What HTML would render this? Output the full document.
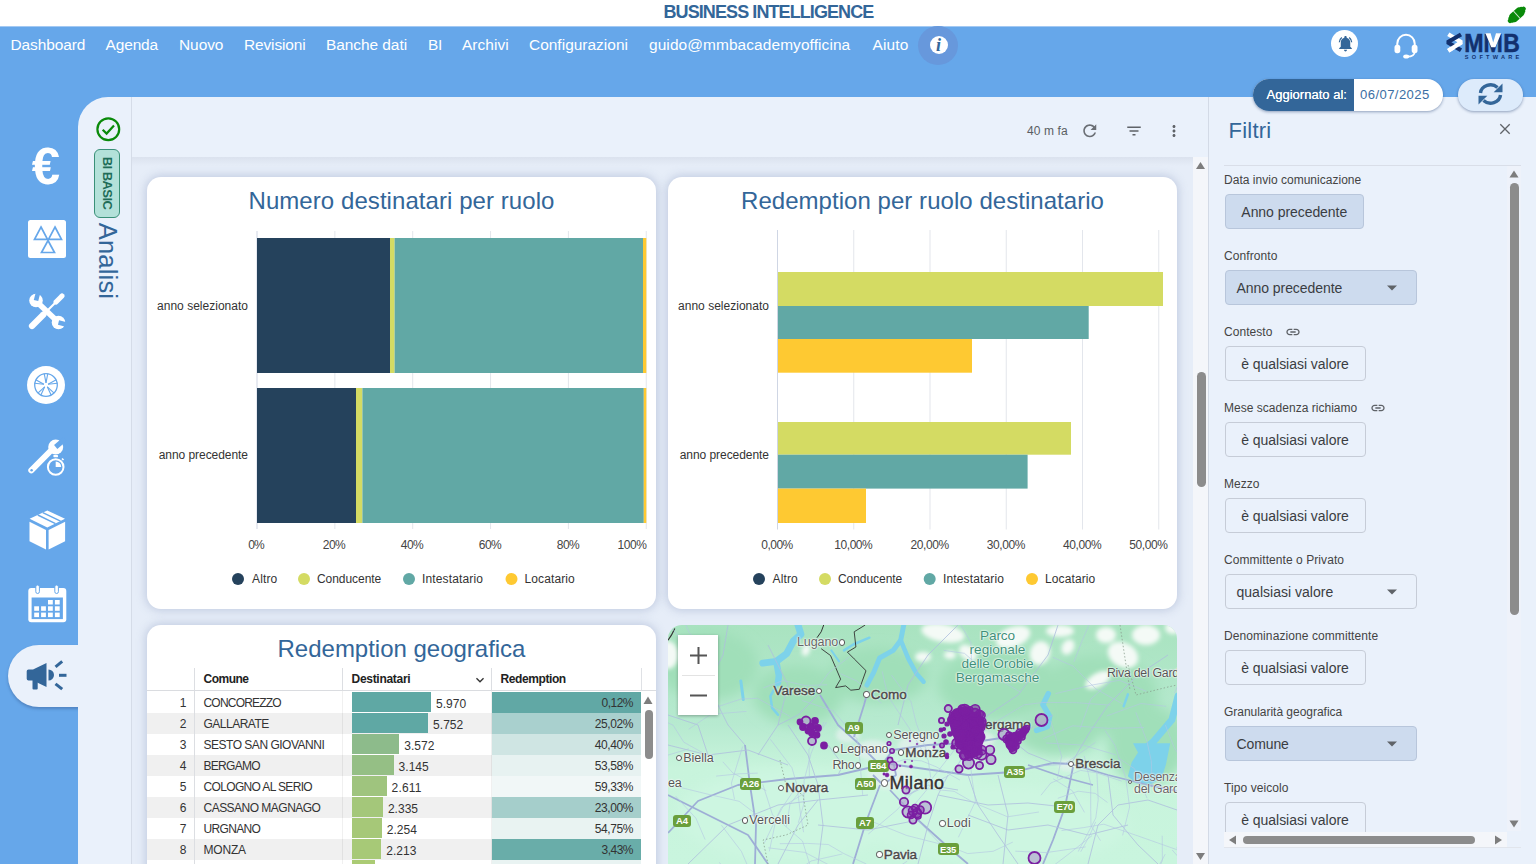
<!DOCTYPE html>
<html lang="it"><head><meta charset="utf-8"><title>Business Intelligence</title>
<style>
:root{--f:"Liberation Sans",sans-serif;}
*{box-sizing:border-box;margin:0;padding:0}
html,body{width:1536px;height:864px;overflow:hidden}
body{background:#66a7ea;font-family:var(--f);position:relative;color:#333}
.abs{position:absolute}
svg{position:absolute;overflow:visible}
.t{position:absolute;white-space:nowrap;line-height:1}
.card{position:absolute;background:#fff;border-radius:14px;box-shadow:0 0 8px 2px rgba(150,165,198,.42)}
</style></head><body>
<div class="abs" style="left:0px;top:0px;width:1536px;height:26px;background:#fff;"></div>
<div class="abs" style="left:0px;top:26px;width:1536px;height:1px;background:#a3c9f3;"></div>
<span class="t" style="letter-spacing:-0.911px;left:663.5px;top:3.04px;font-size:18px;color:#336699;font-weight:700;">BUSINESS INTELLIGENCE</span>
<span class="t" style="letter-spacing:-0.095px;left:10.5px;top:37.29px;font-size:15.45px;color:#fff;">Dashboard</span>
<span class="t" style="letter-spacing:-0.112px;left:105.5px;top:37.29px;font-size:15.45px;color:#fff;">Agenda</span>
<span class="t" style="letter-spacing:-0.047px;left:179px;top:37.29px;font-size:15.45px;color:#fff;">Nuovo</span>
<span class="t" style="letter-spacing:-0.111px;left:244px;top:37.29px;font-size:15.45px;color:#fff;">Revisioni</span>
<span class="t" style="letter-spacing:-0.045px;left:326px;top:37.29px;font-size:15.45px;color:#fff;">Banche dati</span>
<span class="t" style="letter-spacing:-0.383px;left:428px;top:37.29px;font-size:15.45px;color:#fff;">BI</span>
<span class="t" style="letter-spacing:0.058px;left:462px;top:37.29px;font-size:15.45px;color:#fff;">Archivi</span>
<span class="t" style="letter-spacing:0.018px;left:529px;top:37.29px;font-size:15.45px;color:#fff;">Configurazioni</span>
<span class="t" style="letter-spacing:0.094px;left:649px;top:37.29px;font-size:15.45px;color:#fff;">guido@mmbacademyofficina</span>
<span class="t" style="letter-spacing:0.172px;left:872.5px;top:37.29px;font-size:15.45px;color:#fff;">Aiuto</span>
<div class="abs" style="left:8px;top:645px;width:90px;height:62px;background:#eaf1fb;border-radius:31px 0 0 31px;box-shadow:0 2px 3px rgba(40,70,120,.35)"></div>
<div class="abs" style="left:78px;top:97px;width:1458px;height:767px;background:#eaf1fb;border-top-left-radius:30px"></div>
<div class="abs" style="left:131px;top:97px;width:1px;height:767px;background:#d5dce8;"></div>
<div class="abs" style="left:132px;top:157px;width:1076px;height:707px;background:#e6edf8;"></div>
<div class="abs" style="left:132px;top:157px;width:1076px;height:9px;background:linear-gradient(#dbe2ee,rgba(230,237,248,0));"></div>
<div class="abs" style="left:1193px;top:157px;width:15px;height:707px;background:#f4f6fa;"></div>
<div class="abs" style="left:1196.5px;top:372px;width:9px;height:115px;background:#8c8c8c;border-radius:5px"></div>
<svg style="left:1193px;top:157px" width="15" height="707"><path d="M3 12 L7.5 5 L12 12Z" fill="#7d7d7d"/><path d="M3 696 L7.5 703 L12 696Z" fill="#7d7d7d"/></svg>
<div class="card" style="left:147px;top:177px;width:509px;height:432px"></div>
<span class="t" style="letter-spacing:0.066px;left:401.5px;top:189.09px;font-size:24px;color:#336699;transform:translateX(-50%);">Numero destinatari per ruolo</span>
<svg style="left:0;top:0" width="1536" height="864"><rect x="256.50" y="231" width="1" height="298" fill="#cfd6e4"/><rect x="334.35" y="231" width="1" height="298" fill="#e3e6ec"/><rect x="412.20" y="231" width="1" height="298" fill="#e3e6ec"/><rect x="490.05" y="231" width="1" height="298" fill="#e3e6ec"/><rect x="567.90" y="231" width="1" height="298" fill="#e3e6ec"/><rect x="645.75" y="231" width="1" height="298" fill="#e3e6ec"/><rect x="257" y="238" width="133" height="135" fill="#25425c"/><rect x="390" y="238" width="4.6" height="135" fill="#d4db63"/><rect x="394.6" y="238" width="248.4" height="135" fill="#61a8a5"/><rect x="643" y="238" width="3.3" height="135" fill="#fec932"/><rect x="257" y="388" width="99" height="135" fill="#25425c"/><rect x="356" y="388" width="6.4" height="135" fill="#d4db63"/><rect x="362.4" y="388" width="281.4" height="135" fill="#61a8a5"/><rect x="643.8" y="388" width="2.5" height="135" fill="#fec932"/><circle cx="238" cy="579" r="6" fill="#25425c"/><circle cx="304" cy="579" r="6" fill="#d4db63"/><circle cx="409" cy="579" r="6" fill="#61a8a5"/><circle cx="511.5" cy="579" r="6" fill="#fec932"/></svg>
<span class="t" style="letter-spacing:0.014px;left:248px;top:299.90px;font-size:12px;color:#333;transform:translateX(-100%);">anno selezionato</span>
<span class="t" style="letter-spacing:-0.048px;left:248px;top:448.90px;font-size:12px;color:#333;transform:translateX(-100%);">anno precedente</span>
<span class="t" style="letter-spacing:-0.898px;left:256px;top:538.90px;font-size:12px;color:#444;transform:translateX(-50%);">0%</span>
<span class="t" style="letter-spacing:-0.583px;left:334px;top:538.90px;font-size:12px;color:#444;transform:translateX(-50%);">20%</span>
<span class="t" style="letter-spacing:-0.583px;left:412px;top:538.90px;font-size:12px;color:#444;transform:translateX(-50%);">40%</span>
<span class="t" style="letter-spacing:-0.583px;left:490px;top:538.90px;font-size:12px;color:#444;transform:translateX(-50%);">60%</span>
<span class="t" style="letter-spacing:-0.583px;left:568px;top:538.90px;font-size:12px;color:#444;transform:translateX(-50%);">80%</span>
<span class="t" style="letter-spacing:-0.418px;left:646.5px;top:538.90px;font-size:12px;color:#444;transform:translateX(-100%);">100%</span>
<span class="t" style="letter-spacing:0.156px;left:252px;top:573.10px;font-size:12px;color:#333;">Altro</span>
<span class="t" style="letter-spacing:-0.048px;left:317px;top:573.10px;font-size:12px;color:#333;">Conducente</span>
<span class="t" style="letter-spacing:0.145px;left:422px;top:573.10px;font-size:12px;color:#333;">Intestatario</span>
<span class="t" style="letter-spacing:0.115px;left:524.5px;top:573.10px;font-size:12px;color:#333;">Locatario</span>
<div class="card" style="left:668px;top:177px;width:509px;height:432px"></div>
<span class="t" style="letter-spacing:0.041px;left:922.5px;top:189.09px;font-size:24px;color:#336699;transform:translateX(-50%);">Redemption per ruolo destinatario</span>
<svg style="left:0;top:0" width="1536" height="864"><rect x="777.00" y="230" width="1" height="299.5" fill="#cfd6e4"/><rect x="853.25" y="230" width="1" height="299.5" fill="#e3e6ec"/><rect x="929.50" y="230" width="1" height="299.5" fill="#e3e6ec"/><rect x="1005.75" y="230" width="1" height="299.5" fill="#e3e6ec"/><rect x="1082.00" y="230" width="1" height="299.5" fill="#e3e6ec"/><rect x="1158.25" y="230" width="1" height="299.5" fill="#e3e6ec"/><rect x="778" y="272" width="385" height="34" fill="#d4db63"/><rect x="778" y="306" width="310.7" height="33" fill="#61a8a5"/><rect x="778" y="339" width="194" height="33.7" fill="#fec932"/><rect x="778" y="422" width="293" height="32.7" fill="#d4db63"/><rect x="778" y="454.7" width="249.6" height="33.9" fill="#61a8a5"/><rect x="778" y="488.6" width="88" height="34.4" fill="#fec932"/><circle cx="759" cy="579" r="6" fill="#25425c"/><circle cx="825" cy="579" r="6" fill="#d4db63"/><circle cx="929.7" cy="579" r="6" fill="#61a8a5"/><circle cx="1032" cy="579" r="6" fill="#fec932"/></svg>
<span class="t" style="letter-spacing:0.014px;left:769px;top:299.90px;font-size:12px;color:#333;transform:translateX(-100%);">anno selezionato</span>
<span class="t" style="letter-spacing:-0.048px;left:769px;top:448.90px;font-size:12px;color:#333;transform:translateX(-100%);">anno precedente</span>
<span class="t" style="letter-spacing:-0.528px;left:777px;top:538.90px;font-size:12px;color:#444;transform:translateX(-50%);">0,00%</span>
<span class="t" style="letter-spacing:-0.427px;left:853.3px;top:538.90px;font-size:12px;color:#444;transform:translateX(-50%);">10,00%</span>
<span class="t" style="letter-spacing:-0.427px;left:929.6px;top:538.90px;font-size:12px;color:#444;transform:translateX(-50%);">20,00%</span>
<span class="t" style="letter-spacing:-0.427px;left:1005.9px;top:538.90px;font-size:12px;color:#444;transform:translateX(-50%);">30,00%</span>
<span class="t" style="letter-spacing:-0.427px;left:1082.2px;top:538.90px;font-size:12px;color:#444;transform:translateX(-50%);">40,00%</span>
<span class="t" style="letter-spacing:-0.427px;left:1167.5px;top:538.90px;font-size:12px;color:#444;transform:translateX(-100%);">50,00%</span>
<span class="t" style="letter-spacing:0.156px;left:772.5px;top:573.10px;font-size:12px;color:#333;">Altro</span>
<span class="t" style="letter-spacing:-0.048px;left:838px;top:573.10px;font-size:12px;color:#333;">Conducente</span>
<span class="t" style="letter-spacing:0.145px;left:943px;top:573.10px;font-size:12px;color:#333;">Intestatario</span>
<span class="t" style="letter-spacing:0.115px;left:1045px;top:573.10px;font-size:12px;color:#333;">Locatario</span>
<div class="card" style="left:147px;top:625px;width:509px;height:260px"></div>
<span class="t" style="letter-spacing:-0.013px;left:401.5px;top:637.09px;font-size:24px;color:#336699;transform:translateX(-50%);">Redemption geografica</span>
<div class="abs" style="left:491.5px;top:691.6px;width:149px;height:21px;background:#61a8a5;"></div>
<div class="abs" style="left:352px;top:692.4px;width:79.001px;height:19.2px;background:#5fa8a4;"></div>
<span class="t" style="letter-spacing:0.062px;left:186.5px;top:696.70px;font-size:12px;color:#333;transform:translateX(-100%);">1</span>
<span class="t" style="letter-spacing:-0.795px;left:203.5px;top:696.70px;font-size:12px;color:#333;">CONCOREZZO</span>
<span class="t" style="letter-spacing:0.022px;left:436.001px;top:697.70px;font-size:12px;color:#333;">5.970</span>
<span class="t" style="letter-spacing:-0.528px;left:633px;top:696.70px;font-size:12px;color:#333;transform:translateX(-100%);">0,12%</span>
<div class="abs" style="left:147px;top:712.6px;width:494px;height:21px;background:#f0f0f0;"></div>
<div class="abs" style="left:491.5px;top:712.6px;width:149px;height:21px;background:#a9d0ce;"></div>
<div class="abs" style="left:352px;top:713.4px;width:76.1162px;height:19.2px;background:#5fa8a4;"></div>
<span class="t" style="letter-spacing:0.062px;left:186.5px;top:717.70px;font-size:12px;color:#333;transform:translateX(-100%);">2</span>
<span class="t" style="letter-spacing:-0.498px;left:203.5px;top:717.70px;font-size:12px;color:#333;">GALLARATE</span>
<span class="t" style="letter-spacing:0.022px;left:433.116px;top:718.70px;font-size:12px;color:#333;">5.752</span>
<span class="t" style="letter-spacing:-0.427px;left:633px;top:717.70px;font-size:12px;color:#333;transform:translateX(-100%);">25,02%</span>
<div class="abs" style="left:491.5px;top:733.6px;width:149px;height:21px;background:#cfe5e3;"></div>
<div class="abs" style="left:352px;top:734.4px;width:47.2683px;height:19.2px;background:#8dbb8b;"></div>
<span class="t" style="letter-spacing:0.062px;left:186.5px;top:738.70px;font-size:12px;color:#333;transform:translateX(-100%);">3</span>
<span class="t" style="letter-spacing:-0.490px;left:203.5px;top:738.70px;font-size:12px;color:#333;">SESTO SAN GIOVANNI</span>
<span class="t" style="letter-spacing:0.022px;left:404.268px;top:739.70px;font-size:12px;color:#333;">3.572</span>
<span class="t" style="letter-spacing:-0.427px;left:633px;top:738.70px;font-size:12px;color:#333;transform:translateX(-100%);">40,40%</span>
<div class="abs" style="left:147px;top:754.6px;width:494px;height:21px;background:#f0f0f0;"></div>
<div class="abs" style="left:491.5px;top:754.6px;width:149px;height:21px;background:#e7f2f1;"></div>
<div class="abs" style="left:352px;top:755.4px;width:41.6178px;height:19.2px;background:#95bf85;"></div>
<span class="t" style="letter-spacing:0.062px;left:186.5px;top:759.70px;font-size:12px;color:#333;transform:translateX(-100%);">4</span>
<span class="t" style="letter-spacing:-0.701px;left:203.5px;top:759.70px;font-size:12px;color:#333;">BERGAMO</span>
<span class="t" style="letter-spacing:0.022px;left:398.618px;top:760.70px;font-size:12px;color:#333;">3.145</span>
<span class="t" style="letter-spacing:-0.427px;left:633px;top:759.70px;font-size:12px;color:#333;transform:translateX(-100%);">53,58%</span>
<div class="abs" style="left:491.5px;top:775.6px;width:149px;height:21px;background:#f1f7f7;"></div>
<div class="abs" style="left:352px;top:776.4px;width:34.5514px;height:19.2px;background:#9fc47e;"></div>
<span class="t" style="letter-spacing:0.062px;left:186.5px;top:780.70px;font-size:12px;color:#333;transform:translateX(-100%);">5</span>
<span class="t" style="letter-spacing:-0.651px;left:203.5px;top:780.70px;font-size:12px;color:#333;">COLOGNO AL SERIO</span>
<span class="t" style="letter-spacing:0.200px;left:391.551px;top:781.70px;font-size:12px;color:#333;">2.611</span>
<span class="t" style="letter-spacing:-0.427px;left:633px;top:780.70px;font-size:12px;color:#333;transform:translateX(-100%);">59,33%</span>
<div class="abs" style="left:147px;top:796.6px;width:494px;height:21px;background:#f0f0f0;"></div>
<div class="abs" style="left:491.5px;top:796.6px;width:149px;height:21px;background:#a5cecb;"></div>
<div class="abs" style="left:352px;top:797.4px;width:30.8991px;height:19.2px;background:#a4c77a;"></div>
<span class="t" style="letter-spacing:0.062px;left:186.5px;top:801.70px;font-size:12px;color:#333;transform:translateX(-100%);">6</span>
<span class="t" style="letter-spacing:-0.520px;left:203.5px;top:801.70px;font-size:12px;color:#333;">CASSANO MAGNAGO</span>
<span class="t" style="letter-spacing:0.022px;left:387.899px;top:802.70px;font-size:12px;color:#333;">2.335</span>
<span class="t" style="letter-spacing:-0.427px;left:633px;top:801.70px;font-size:12px;color:#333;transform:translateX(-100%);">23,00%</span>
<div class="abs" style="left:491.5px;top:817.6px;width:149px;height:21px;background:#e9f3f2;"></div>
<div class="abs" style="left:352px;top:818.4px;width:29.8272px;height:19.2px;background:#a6c878;"></div>
<span class="t" style="letter-spacing:0.062px;left:186.5px;top:822.70px;font-size:12px;color:#333;transform:translateX(-100%);">7</span>
<span class="t" style="letter-spacing:-0.667px;left:203.5px;top:822.70px;font-size:12px;color:#333;">URGNANO</span>
<span class="t" style="letter-spacing:0.022px;left:386.827px;top:823.70px;font-size:12px;color:#333;">2.254</span>
<span class="t" style="letter-spacing:-0.427px;left:633px;top:822.70px;font-size:12px;color:#333;transform:translateX(-100%);">54,75%</span>
<div class="abs" style="left:147px;top:838.6px;width:494px;height:21px;background:#f0f0f0;"></div>
<div class="abs" style="left:491.5px;top:838.6px;width:149px;height:21px;background:#69ada9;"></div>
<div class="abs" style="left:352px;top:839.4px;width:29.2846px;height:19.2px;background:#a7c977;"></div>
<span class="t" style="letter-spacing:0.062px;left:186.5px;top:843.70px;font-size:12px;color:#333;transform:translateX(-100%);">8</span>
<span class="t" style="letter-spacing:-0.191px;left:203.5px;top:843.70px;font-size:12px;color:#333;">MONZA</span>
<span class="t" style="letter-spacing:0.022px;left:386.285px;top:844.70px;font-size:12px;color:#333;">2.213</span>
<span class="t" style="letter-spacing:-0.528px;left:633px;top:843.70px;font-size:12px;color:#333;transform:translateX(-100%);">3,43%</span>
<div class="abs" style="left:491.5px;top:859.6px;width:149px;height:21px;background:#e9f3f2;"></div>
<div class="abs" style="left:352px;top:860.4px;width:22.7078px;height:19.2px;background:#abcb74;"></div>
<div class="abs" style="left:193.7px;top:668px;width:1px;height:200px;background:#dcdee2;"></div>
<div class="abs" style="left:342px;top:668px;width:1px;height:23px;background:#dcdee2;"></div>
<div class="abs" style="left:342px;top:691px;width:1px;height:180px;background:rgba(0,0,0,.06);"></div>
<div class="abs" style="left:491px;top:668px;width:1px;height:23px;background:#dcdee2;"></div>
<div class="abs" style="left:491px;top:691px;width:1px;height:180px;background:rgba(0,0,0,.06);"></div>
<div class="abs" style="left:640.5px;top:668px;width:1px;height:23px;background:#dfe1e5;"></div>
<div class="abs" style="left:147px;top:690px;width:509px;height:1px;background:#dadce0;"></div>
<span class="t" style="letter-spacing:-0.508px;left:203.5px;top:673.20px;font-size:12px;color:#222;font-weight:700;">Comune</span>
<span class="t" style="letter-spacing:-0.286px;left:351.5px;top:673.20px;font-size:12px;color:#222;font-weight:700;">Destinatari</span>
<span class="t" style="letter-spacing:-0.405px;left:500.5px;top:673.20px;font-size:12px;color:#222;font-weight:700;">Redemption</span>
<svg style="left:472px;top:672px" width="16" height="16" viewBox="0 0 24 24"><path d="M7.4 8.6 12 13.2l4.6-4.6L18 10l-6 6-6-6z" fill="#333"/></svg>
<div class="abs" style="left:644.5px;top:709.5px;width:8px;height:49px;background:#8c8c8c;border-radius:4px"></div>
<svg style="left:641px;top:691px" width="15" height="20"><path d="M2.5 13 L7 5.5 L11.5 13Z" fill="#7d7d7d"/></svg>
<svg style="left:668px;top:625px" width="509" height="239" viewBox="0 0 509 239"><defs><clipPath id="mc"><path d="M0 14 A14 14 0 0 1 14 0 H495 A14 14 0 0 1 509 14 V239 H0Z"/></clipPath><filter id="bl" x="-20%" y="-20%" width="140%" height="140%"><feGaussianBlur stdDeviation="2.2"/></filter><filter id="bl2" x="-20%" y="-20%" width="140%" height="140%"><feGaussianBlur stdDeviation="6"/></filter><linearGradient id="mg" x1="0" y1="0" x2="0" y2="1"><stop offset="0" stop-color="#a9e3c0"/><stop offset="0.42" stop-color="#b7ead0"/><stop offset="0.6" stop-color="#c8f4dc"/><stop offset="1" stop-color="#c9f5de"/></linearGradient></defs><g clip-path="url(#mc)"><rect width="509" height="239" fill="url(#mg)"/><g filter="url(#bl2)" fill="#a0dfb9"><ellipse cx="40" cy="40" rx="50" ry="35"/><ellipse cx="130" cy="70" rx="45" ry="30"/><ellipse cx="210" cy="50" rx="50" ry="28"/><ellipse cx="330" cy="60" rx="60" ry="35"/><ellipse cx="430" cy="70" rx="60" ry="40"/><ellipse cx="480" cy="120" rx="40" ry="40"/><ellipse cx="390" cy="110" rx="40" ry="20"/></g><g filter="url(#bl2)" fill="#cdf6e1"><ellipse cx="120" cy="190" rx="110" ry="45"/><ellipse cx="330" cy="200" rx="130" ry="40"/><ellipse cx="250" cy="150" rx="60" ry="25"/></g><g filter="url(#bl)" fill="#f4faf6"><ellipse cx="275" cy="8" rx="22" ry="9" transform="rotate(10 275 8)"/><ellipse cx="300" cy="28" rx="10" ry="7" transform="rotate(40 300 28)"/><ellipse cx="345" cy="12" rx="18" ry="10" transform="rotate(-20 345 12)"/><ellipse cx="372" cy="28" rx="10" ry="12" transform="rotate(20 372 28)"/><ellipse cx="392" cy="6" rx="14" ry="6" transform="rotate(0 392 6)"/><ellipse cx="255" cy="32" rx="8" ry="5" transform="rotate(0 255 32)"/><ellipse cx="282" cy="30" rx="6" ry="4" transform="rotate(0 282 30)"/><ellipse cx="455" cy="30" rx="16" ry="12" transform="rotate(30 455 30)"/><ellipse cx="478" cy="10" rx="14" ry="10" transform="rotate(0 478 10)"/><ellipse cx="438" cy="10" rx="10" ry="8" transform="rotate(0 438 10)"/><ellipse cx="430" cy="55" rx="14" ry="7" transform="rotate(-30 430 55)"/><ellipse cx="400" cy="22" rx="6" ry="8" transform="rotate(30 400 22)"/><ellipse cx="0" cy="30" rx="10" ry="14" transform="rotate(0 0 30)"/><ellipse cx="505" cy="3" rx="8" ry="6" transform="rotate(0 505 3)"/><ellipse cx="138" cy="25" rx="4" ry="6" transform="rotate(20 138 25)"/></g><g filter="url(#bl)" fill="#e4f1ee" opacity=".8"><ellipse cx="222" cy="150" rx="22" ry="14"/><ellipse cx="205" cy="125" rx="18" ry="10"/><ellipse cx="250" cy="120" rx="20" ry="10"/><ellipse cx="305" cy="115" rx="22" ry="10"/><ellipse cx="180" cy="110" rx="12" ry="8"/><ellipse cx="400" cy="140" rx="10" ry="6"/></g><polyline points="129.5,-1.7 132.9,9.3 125.3,16.1 118.5,28.8 108.3,36.4 94.8,38.1" fill="none" stroke="#7dd2ea" stroke-width="7" stroke-linecap="round" stroke-linejoin="round"/><polyline points="108.3,36.4 110.9,50.8 110.0,57.5" fill="none" stroke="#7dd2ea" stroke-width="6.5" stroke-linecap="round" stroke-linejoin="round"/><polyline points="110.0,57.5 102.4,71.1 104.1,82.9 110.0,89.7" fill="none" stroke="#7dd2ea" stroke-width="2.5" stroke-linecap="round" stroke-linejoin="round"/><polyline points="72.8,55.9 75.3,74.5" fill="none" stroke="#7dd2ea" stroke-width="3" stroke-linecap="round" stroke-linejoin="round"/><polyline points="176.0,25.4 185.3,19.5 201.4,12.7" fill="none" stroke="#7dd2ea" stroke-width="2.5" stroke-linecap="round" stroke-linejoin="round"/><polyline points="163.3,25.4 171.0,36.4" fill="none" stroke="#7dd2ea" stroke-width="2" stroke-linecap="round" stroke-linejoin="round"/><polyline points="236.1,-1.7 232.7,15.2 225.1,25.4 211.6,33.0 205.7,47.4 198.9,60.1" fill="none" stroke="#7dd2ea" stroke-width="5" stroke-linecap="round" stroke-linejoin="round"/><polyline points="232.7,15.2 240.4,33.9 248.8,49.1 255.6,56.7" fill="none" stroke="#7dd2ea" stroke-width="4.5" stroke-linecap="round" stroke-linejoin="round"/><polyline points="380.3,68.6 374.9,79.6 381.7,91.4 379.5,101.6 368.5,105.3" fill="none" stroke="#7dd2ea" stroke-width="5.5" stroke-linecap="round" stroke-linejoin="round"/><polyline points="510.0,71.1 503.9,94.8 485.3,116.8 475.1,125.3" fill="none" stroke="#7dd2ea" stroke-width="7" stroke-linecap="round" stroke-linejoin="round"/><polygon points="465.0,118.2 502.2,118.2 498.0,139.3 493.7,152.9 483.6,158.8 468.3,158.3 459.9,151.2 463.6,137.6 470.0,127.5" fill="#7dd2ea"/><polyline points="459.9,69.4 455.7,81.2" fill="none" stroke="#7dd2ea" stroke-width="2.5" stroke-linecap="round" stroke-linejoin="round"/><polyline points="155.7,0.0 153.2,6.8 149.0,12.7" fill="none" stroke="#333" stroke-width="1"/><polyline points="197.2,0.0 186.2,6.8 187.9,22.0 179.4,27.1 186.2,33.9 198.0,45.7 191.3,64.3 182.8,65.2 177.7,60.9 167.6,62.6 172.6,54.2 167.6,42.3 162.5,30.5 153.2,23.7" fill="none" stroke="#333" stroke-width="0.9"/><polyline points="6.8,3.4 3.4,10.2 0.0,15.2" fill="none" stroke="#333" stroke-width="1.2"/><polyline points="0,208 30,176 70,160 120,154 170,150 200,143 215,138" fill="none" stroke="#9eaed6" stroke-width="1.8" stroke-linejoin="round" opacity="1"/><polyline points="215,138 250,143 300,150 345,147 385,138 403,139 440,150 480,160 509,166" fill="none" stroke="#9eaed6" stroke-width="1.8" stroke-linejoin="round" opacity="1"/><polyline points="77,120 82,160 88,200 87,239" fill="none" stroke="#9eaed6" stroke-width="1.8" stroke-linejoin="round" opacity="1"/><polyline points="0,170 40,190 80,210 100,239" fill="none" stroke="#9eaed6" stroke-width="1.8" stroke-linejoin="round" opacity="1"/><polyline points="212,140 190,118 170,100 152,70" fill="none" stroke="#9eaed6" stroke-width="1.8" stroke-linejoin="round" opacity="1"/><polyline points="186,112 196,80 199,69" fill="none" stroke="#9eaed6" stroke-width="1.8" stroke-linejoin="round" opacity="1"/><polyline points="212,160 198,197 185,239" fill="none" stroke="#9eaed6" stroke-width="1.8" stroke-linejoin="round" opacity="1"/><polyline points="222,165 250,195 280,222 300,239" fill="none" stroke="#9eaed6" stroke-width="1.8" stroke-linejoin="round" opacity="1"/><polyline points="405,142 397,182 385,215 375,239" fill="none" stroke="#9eaed6" stroke-width="1.8" stroke-linejoin="round" opacity="1"/><polyline points="360,140 395,152 425,160" fill="none" stroke="#9eaed6" stroke-width="1.8" stroke-linejoin="round" opacity="1"/><polyline points="215,138 225,125 260,120 300,118 340,112" fill="none" stroke="#9eaed6" stroke-width="1.8" stroke-linejoin="round" opacity="1"/><polyline points="205,150 215,160 228,150 225,135" fill="none" stroke="#9eaed6" stroke-width="1.8" stroke-linejoin="round" opacity="1"/><polyline points="0,120 40,130 80,125 120,140" fill="none" stroke="#aebfde" stroke-width="0.9" stroke-linejoin="round" opacity="0.9"/><polyline points="20,239 60,200 110,180 150,175 200,170" fill="none" stroke="#aebfde" stroke-width="0.9" stroke-linejoin="round" opacity="0.9"/><polyline points="110,239 130,200 150,175" fill="none" stroke="#aebfde" stroke-width="0.9" stroke-linejoin="round" opacity="0.9"/><polyline points="120,100 140,130 150,160 155,200 150,239" fill="none" stroke="#aebfde" stroke-width="0.9" stroke-linejoin="round" opacity="0.9"/><polyline points="250,239 260,200 270,170 280,150" fill="none" stroke="#aebfde" stroke-width="0.9" stroke-linejoin="round" opacity="0.9"/><polyline points="300,150 310,180 330,210 350,239" fill="none" stroke="#aebfde" stroke-width="0.9" stroke-linejoin="round" opacity="0.9"/><polyline points="330,150 340,190 335,239" fill="none" stroke="#aebfde" stroke-width="0.9" stroke-linejoin="round" opacity="0.9"/><polyline points="420,239 430,200 450,180 480,175 509,185" fill="none" stroke="#aebfde" stroke-width="0.9" stroke-linejoin="round" opacity="0.9"/><polyline points="440,150 445,190 470,220 490,239" fill="none" stroke="#aebfde" stroke-width="0.9" stroke-linejoin="round" opacity="0.9"/><polyline points="270,170 320,180 360,178 397,182" fill="none" stroke="#aebfde" stroke-width="0.9" stroke-linejoin="round" opacity="0.9"/><polyline points="150,200 200,205 250,195" fill="none" stroke="#aebfde" stroke-width="0.9" stroke-linejoin="round" opacity="0.9"/><polyline points="40,60 60,100 77,120" fill="none" stroke="#aebfde" stroke-width="0.9" stroke-linejoin="round" opacity="0.9"/><polyline points="100,20 120,60 110,100 90,130" fill="none" stroke="#aebfde" stroke-width="0.9" stroke-linejoin="round" opacity="0.9"/><polyline points="150,70 130,90 110,100" fill="none" stroke="#aebfde" stroke-width="0.9" stroke-linejoin="round" opacity="0.9"/><polyline points="230,100 240,60 260,30 290,0" fill="none" stroke="#aebfde" stroke-width="0.9" stroke-linejoin="round" opacity="0.9"/><polyline points="300,118 320,90 350,70 380,30 390,0" fill="none" stroke="#aebfde" stroke-width="0.9" stroke-linejoin="round" opacity="0.9"/><polyline points="340,112 370,100 385,90" fill="none" stroke="#aebfde" stroke-width="0.9" stroke-linejoin="round" opacity="0.9"/><polyline points="403,139 420,110 440,80 470,50 500,30" fill="none" stroke="#aebfde" stroke-width="0.9" stroke-linejoin="round" opacity="0.9"/><polyline points="340,112 360,128 385,138" fill="none" stroke="#aebfde" stroke-width="0.9" stroke-linejoin="round" opacity="0.9"/><polyline points="60,0 55,30 40,60" fill="none" stroke="#aebfde" stroke-width="0.9" stroke-linejoin="round" opacity="0.9"/><polyline points="300,190 340,205 380,200 420,210 460,200" fill="none" stroke="#aebfde" stroke-width="0.9" stroke-linejoin="round" opacity="0.9"/><polyline points="160,120 175,140 170,150" fill="none" stroke="#aebfde" stroke-width="0.9" stroke-linejoin="round" opacity="0.9"/><polyline points="0,90 30,100 40,130" fill="none" stroke="#aebfde" stroke-width="0.9" stroke-linejoin="round" opacity="0.9"/><polyline points="240,170 260,160 290,165" fill="none" stroke="#aebfde" stroke-width="0.9" stroke-linejoin="round" opacity="0.9"/><polyline points="230.3,175.6 261.5,157.0 283.1,129.3 301.0,104.8" fill="none" stroke="#b4c6e2" stroke-width="0.8" stroke-linejoin="round" opacity="0.75"/><polyline points="94.8,159.3 104.6,190.1 134.5,216.0 143.8,245.9 146.9,264.6" fill="none" stroke="#b4c6e2" stroke-width="0.8" stroke-linejoin="round" opacity="0.75"/><polyline points="7.6,171.1 27.9,193.2 37.1,214.5" fill="none" stroke="#b4c6e2" stroke-width="0.8" stroke-linejoin="round" opacity="0.75"/><polyline points="300.8,123.1 304.1,154.5 307.5,176.2 290.4,212.3" fill="none" stroke="#b4c6e2" stroke-width="0.8" stroke-linejoin="round" opacity="0.75"/><polyline points="427.7,196.9 421.2,211.3 412.7,226.8" fill="none" stroke="#b4c6e2" stroke-width="0.8" stroke-linejoin="round" opacity="0.75"/><polyline points="54.9,136.9 64.9,148.0 98.3,165.7" fill="none" stroke="#b4c6e2" stroke-width="0.8" stroke-linejoin="round" opacity="0.75"/><polyline points="239.2,236.2 222.4,246.9 200.4,255.1" fill="none" stroke="#b4c6e2" stroke-width="0.8" stroke-linejoin="round" opacity="0.75"/><polyline points="158.4,97.2 140.9,124.8 141.4,151.4" fill="none" stroke="#b4c6e2" stroke-width="0.8" stroke-linejoin="round" opacity="0.75"/><polyline points="247.8,193.2 270.7,217.4 299.7,228.6 325.1,226.3 344.8,217.1" fill="none" stroke="#b4c6e2" stroke-width="0.8" stroke-linejoin="round" opacity="0.75"/><polyline points="494.2,210.7 494.4,235.5 481.8,263.9" fill="none" stroke="#b4c6e2" stroke-width="0.8" stroke-linejoin="round" opacity="0.75"/><polyline points="51.1,237.5 73.2,258.1 83.3,280.6 99.6,292.6" fill="none" stroke="#b4c6e2" stroke-width="0.8" stroke-linejoin="round" opacity="0.75"/><polyline points="324.0,97.2 299.3,127.3 281.1,150.4 263.5,159.1 239.4,188.1" fill="none" stroke="#b4c6e2" stroke-width="0.8" stroke-linejoin="round" opacity="0.75"/><polyline points="416.3,130.9 422.7,159.1 422.7,183.8 423.0,200.7 432.5,215.7" fill="none" stroke="#b4c6e2" stroke-width="0.8" stroke-linejoin="round" opacity="0.75"/><polyline points="260.8,131.7 248.3,98.4 243.0,76.7 223.5,50.1" fill="none" stroke="#b4c6e2" stroke-width="0.8" stroke-linejoin="round" opacity="0.75"/><polyline points="35.0,127.9 15.8,117.2 5.1,100.2 -14.7,91.1 -30.1,85.2" fill="none" stroke="#b4c6e2" stroke-width="0.8" stroke-linejoin="round" opacity="0.75"/><polyline points="89.7,148.1 71.3,148.8 48.1,151.1" fill="none" stroke="#b4c6e2" stroke-width="0.8" stroke-linejoin="round" opacity="0.75"/><polyline points="373.0,170.2 382.7,158.1 412.6,145.4 428.0,147.7 453.7,156.1" fill="none" stroke="#b4c6e2" stroke-width="0.8" stroke-linejoin="round" opacity="0.75"/><polyline points="371.8,140.9 396.0,139.4 427.4,117.4" fill="none" stroke="#b4c6e2" stroke-width="0.8" stroke-linejoin="round" opacity="0.75"/><polyline points="375.2,113.7 404.7,100.8 441.3,103.4 476.1,102.4" fill="none" stroke="#b4c6e2" stroke-width="0.8" stroke-linejoin="round" opacity="0.75"/><polyline points="439.5,177.5 427.2,168.4 410.1,166.2 389.8,173.3" fill="none" stroke="#b4c6e2" stroke-width="0.8" stroke-linejoin="round" opacity="0.75"/><polyline points="211.9,142.5 236.6,134.4 253.6,135.9 268.2,141.8 291.8,155.0" fill="none" stroke="#b4c6e2" stroke-width="0.8" stroke-linejoin="round" opacity="0.75"/><polyline points="117.2,195.6 90.4,190.9 71.2,176.3 41.6,169.6 8.7,161.5" fill="none" stroke="#b4c6e2" stroke-width="0.8" stroke-linejoin="round" opacity="0.75"/><polyline points="174.3,229.0 143.5,235.9 121.9,250.0" fill="none" stroke="#b4c6e2" stroke-width="0.8" stroke-linejoin="round" opacity="0.75"/><polyline points="410.2,226.6 427.8,192.9 430.2,174.7 428.4,137.4" fill="none" stroke="#b4c6e2" stroke-width="0.8" stroke-linejoin="round" opacity="0.75"/><polyline points="20.7,104.2 42.9,89.3 78.5,86.4" fill="none" stroke="#b4c6e2" stroke-width="0.8" stroke-linejoin="round" opacity="0.75"/><polyline points="194.7,169.9 191.4,130.5 189.0,113.8 165.2,85.7 134.1,75.5" fill="none" stroke="#b4c6e2" stroke-width="0.8" stroke-linejoin="round" opacity="0.75"/><polyline points="290.4,139.5 300.8,116.6 302.7,82.5" fill="none" stroke="#b4c6e2" stroke-width="0.8" stroke-linejoin="round" opacity="0.75"/><polyline points="135.6,207.2 132.6,189.7 128.7,159.0 123.9,142.7 102.4,114.3" fill="none" stroke="#b4c6e2" stroke-width="0.8" stroke-linejoin="round" opacity="0.75"/><polyline points="130.3,197.8 135.8,179.2 136.1,155.5 143.1,128.4 155.9,97.0" fill="none" stroke="#b4c6e2" stroke-width="0.8" stroke-linejoin="round" opacity="0.75"/><polyline points="200.3,209.0 228.9,185.0 246.5,165.6" fill="none" stroke="#b4c6e2" stroke-width="0.8" stroke-linejoin="round" opacity="0.75"/><polyline points="100.2,222.8 136.9,227.4 171.1,245.2 199.5,258.5 232.4,261.2" fill="none" stroke="#b4c6e2" stroke-width="0.8" stroke-linejoin="round" opacity="0.75"/><polyline points="416.5,187.4 404.4,165.8 385.1,153.7" fill="none" stroke="#b4c6e2" stroke-width="0.8" stroke-linejoin="round" opacity="0.75"/><polyline points="497.2,229.2 485.8,250.0 485.8,276.1 483.7,310.2 483.0,325.9" fill="none" stroke="#b4c6e2" stroke-width="0.8" stroke-linejoin="round" opacity="0.75"/><polyline points="411.9,104.2 422.9,74.0 443.0,56.3" fill="none" stroke="#b4c6e2" stroke-width="0.8" stroke-linejoin="round" opacity="0.75"/><polyline points="508.9,224.7 472.5,211.8 435.9,199.2 415.6,202.6 393.5,205.6" fill="none" stroke="#b4c6e2" stroke-width="0.8" stroke-linejoin="round" opacity="0.75"/><polyline points="371.0,187.0 339.6,191.8 305.6,177.6 286.1,166.3 257.6,163.5" fill="none" stroke="#b4c6e2" stroke-width="0.8" stroke-linejoin="round" opacity="0.75"/><polyline points="138.9,166.7 113.3,182.6 96.4,217.9" fill="none" stroke="#b4c6e2" stroke-width="0.8" stroke-linejoin="round" opacity="0.75"/><polyline points="262.7,152.7 260.3,135.5 240.8,102.6 219.8,70.9 214.2,46.4" fill="none" stroke="#b4c6e2" stroke-width="0.8" stroke-linejoin="round" opacity="0.75"/><polyline points="125.4,166.0 115.5,180.7 108.0,194.5 101.3,226.4" fill="none" stroke="#b4c6e2" stroke-width="0.8" stroke-linejoin="round" opacity="0.75"/><polyline points="497.4,100.1 505.8,121.6 521.5,147.7" fill="none" stroke="#b4c6e2" stroke-width="0.8" stroke-linejoin="round" opacity="0.75"/><polyline points="53.4,200.2 73.4,226.4 88.1,260.4 113.7,277.5 130.7,302.7" fill="none" stroke="#b4c6e2" stroke-width="0.8" stroke-linejoin="round" opacity="0.75"/><polyline points="273.9,219.4 238.8,210.5 205.0,196.9" fill="none" stroke="#b4c6e2" stroke-width="0.8" stroke-linejoin="round" opacity="0.75"/><polyline points="118.4,201.7 122.0,179.1 134.6,163.0" fill="none" stroke="#b4c6e2" stroke-width="0.8" stroke-linejoin="round" opacity="0.75"/><polyline points="508.2,222.8 524.0,229.5 549.0,236.3" fill="none" stroke="#b4c6e2" stroke-width="0.8" stroke-linejoin="round" opacity="0.75"/><polyline points="479.1,173.2 466.5,143.7 449.8,132.5" fill="none" stroke="#b4c6e2" stroke-width="0.8" stroke-linejoin="round" opacity="0.75"/><polyline points="347.3,226.2 378.2,227.6 417.7,221.9" fill="none" stroke="#b4c6e2" stroke-width="0.8" stroke-linejoin="round" opacity="0.75"/><polyline points="424.0,210.6 401.4,228.5 378.2,246.2" fill="none" stroke="#b4c6e2" stroke-width="0.8" stroke-linejoin="round" opacity="0.75"/><polyline points="74.6,121.6 63.4,158.1 66.5,174.3" fill="none" stroke="#b4c6e2" stroke-width="0.8" stroke-linejoin="round" opacity="0.75"/><polyline points="484.3,161.5 483.3,135.9 478.9,116.1 467.8,87.3" fill="none" stroke="#b4c6e2" stroke-width="0.8" stroke-linejoin="round" opacity="0.75"/><polyline points="20.8,123.8 -3.3,131.1 -18.4,142.8 -30.7,152.0" fill="none" stroke="#b4c6e2" stroke-width="0.8" stroke-linejoin="round" opacity="0.75"/><polyline points="454.6,210.4 461.6,182.0 457.7,152.7 447.0,120.4 437.1,105.4" fill="none" stroke="#b4c6e2" stroke-width="0.8" stroke-linejoin="round" opacity="0.75"/><polyline points="378.2,118.0 415.1,120.1 447.9,129.9" fill="none" stroke="#b4c6e2" stroke-width="0.8" stroke-linejoin="round" opacity="0.75"/><polyline points="389.5,153.4 393.6,131.3 382.7,95.7" fill="none" stroke="#b4c6e2" stroke-width="0.8" stroke-linejoin="round" opacity="0.75"/><polyline points="504.2,225.0 525.2,248.7 550.3,267.7 571.3,286.7" fill="none" stroke="#b4c6e2" stroke-width="0.8" stroke-linejoin="round" opacity="0.75"/><polyline points="198.3,239.0 175.7,228.5 160.3,219.5 139.4,218.4 111.8,218.7" fill="none" stroke="#b4c6e2" stroke-width="0.8" stroke-linejoin="round" opacity="0.75"/><polyline points="387.5,68.6 424.1,60.0 451.4,55.3 478.4,66.3" fill="none" stroke="#b4c6e2" stroke-width="0.8" stroke-linejoin="round" opacity="0.75"/><polyline points="506.5,67.9 519.7,39.0 540.2,25.2" fill="none" stroke="#b4c6e2" stroke-width="0.8" stroke-linejoin="round" opacity="0.75"/><polyline points="477.7,48.9 507.4,44.7 534.0,38.6 556.1,27.0" fill="none" stroke="#b4c6e2" stroke-width="0.8" stroke-linejoin="round" opacity="0.75"/><polyline points="159.0,59.8 136.9,60.5 115.1,55.5 95.3,62.9" fill="none" stroke="#b4c6e2" stroke-width="0.8" stroke-linejoin="round" opacity="0.75"/><polyline points="21.8,31.7 10.6,11.8 -6.9,-12.1 -15.1,-33.5" fill="none" stroke="#b4c6e2" stroke-width="0.8" stroke-linejoin="round" opacity="0.75"/><polyline points="406.0,36.8 413.6,17.1 428.6,-18.3 445.1,-39.3" fill="none" stroke="#b4c6e2" stroke-width="0.8" stroke-linejoin="round" opacity="0.75"/><polyline points="498.2,81.3 472.9,78.5 438.6,91.0" fill="none" stroke="#b4c6e2" stroke-width="0.8" stroke-linejoin="round" opacity="0.75"/><polyline points="181.6,31.6 160.7,47.8 143.4,71.7" fill="none" stroke="#b4c6e2" stroke-width="0.8" stroke-linejoin="round" opacity="0.75"/><polyline points="213.5,78.3 188.8,56.0 172.5,48.7" fill="none" stroke="#b4c6e2" stroke-width="0.8" stroke-linejoin="round" opacity="0.75"/><polyline points="454.4,78.8 428.0,64.0 405.0,41.1 384.9,32.3" fill="none" stroke="#b4c6e2" stroke-width="0.8" stroke-linejoin="round" opacity="0.75"/><polyline points="121.9,91.4 89.6,73.3 73.1,74.0 48.8,82.0 31.4,84.9" fill="none" stroke="#b4c6e2" stroke-width="0.8" stroke-linejoin="round" opacity="0.75"/><polyline points="275.7,25.4 296.4,28.3 316.9,46.0 337.0,58.0 352.8,67.3" fill="none" stroke="#b4c6e2" stroke-width="0.8" stroke-linejoin="round" opacity="0.75"/><polyline points="442.6,80.2 408.5,77.7 374.8,77.5 356.2,79.8 325.4,98.3" fill="none" stroke="#b4c6e2" stroke-width="0.8" stroke-linejoin="round" opacity="0.75"/><polyline points="303.7,41.8 302.9,17.6 284.7,-14.5" fill="none" stroke="#b4c6e2" stroke-width="0.8" stroke-linejoin="round" opacity="0.75"/><polyline points="40.0,26.2 21.1,7.5 15.1,-6.5 -7.2,-37.0" fill="none" stroke="#b4c6e2" stroke-width="0.8" stroke-linejoin="round" opacity="0.75"/><polyline points="112,135 118,160 135,170 140,200 118,210 95,215 100,239" fill="none" stroke="#8aa08f" stroke-width="0.8" stroke-dasharray="1.5 2"/><polyline points="460,40 468,70 500,62 509,60" fill="none" stroke="#8aa08f" stroke-width="0.8" stroke-dasharray="1.5 2"/><polyline points="452,0 458,40 462,65" fill="none" stroke="#8aa08f" stroke-width="0.8" stroke-dasharray="1.5 2"/></g></svg>
<div class="abs" style="left:844.5px;top:722px;width:18px;height:12px;background:#6a9f3c;border-radius:3px"></div>
<span class="t" style="letter-spacing:-0.156px;left:853.5px;top:723.40px;font-size:9.5px;color:#fff;font-weight:700;transform:translateX(-50%);">A9</span>
<div class="abs" style="left:867.5px;top:760px;width:21px;height:12px;background:#6a9f3c;border-radius:3px"></div>
<span class="t" style="letter-spacing:-0.219px;left:878px;top:761.40px;font-size:9.5px;color:#fff;font-weight:700;transform:translateX(-50%);">E64</span>
<div class="abs" style="left:740px;top:778px;width:21px;height:12px;background:#6a9f3c;border-radius:3px"></div>
<span class="t" style="letter-spacing:-0.047px;left:750.5px;top:779.40px;font-size:9.5px;color:#fff;font-weight:700;transform:translateX(-50%);">A26</span>
<div class="abs" style="left:854.5px;top:778px;width:21px;height:12px;background:#6a9f3c;border-radius:3px"></div>
<span class="t" style="letter-spacing:-0.047px;left:865px;top:779.40px;font-size:9.5px;color:#fff;font-weight:700;transform:translateX(-50%);">A50</span>
<div class="abs" style="left:673px;top:815px;width:18px;height:12px;background:#6a9f3c;border-radius:3px"></div>
<span class="t" style="letter-spacing:-0.156px;left:682px;top:816.40px;font-size:9.5px;color:#fff;font-weight:700;transform:translateX(-50%);">A4</span>
<div class="abs" style="left:856px;top:816.5px;width:18px;height:12px;background:#6a9f3c;border-radius:3px"></div>
<span class="t" style="letter-spacing:-0.156px;left:865px;top:817.90px;font-size:9.5px;color:#fff;font-weight:700;transform:translateX(-50%);">A7</span>
<div class="abs" style="left:1004.3px;top:766px;width:21px;height:12px;background:#6a9f3c;border-radius:3px"></div>
<span class="t" style="letter-spacing:-0.047px;left:1014.8px;top:767.40px;font-size:9.5px;color:#fff;font-weight:700;transform:translateX(-50%);">A35</span>
<div class="abs" style="left:1054.2px;top:800.8px;width:21px;height:12px;background:#6a9f3c;border-radius:3px"></div>
<span class="t" style="letter-spacing:-0.219px;left:1064.7px;top:802.20px;font-size:9.5px;color:#fff;font-weight:700;transform:translateX(-50%);">E70</span>
<div class="abs" style="left:937.5px;top:843.3px;width:21px;height:12px;background:#6a9f3c;border-radius:3px"></div>
<span class="t" style="letter-spacing:-0.219px;left:948px;top:844.70px;font-size:9.5px;color:#fff;font-weight:700;transform:translateX(-50%);">E35</span>
<div class="abs" style="left:838.9px;top:639.4px;width:6.2px;height:6.2px;border:1.3px solid #555;border-radius:50%;background:#fff"></div>
<span class="t" style="letter-spacing:-0.083px;left:838.2px;top:636.48px;font-size:12.5px;color:#666;transform:translateX(-100%);text-shadow:0 0 2px #fff,0 0 2px #fff,0 0 1px #fff;">Lugano</span>
<div class="abs" style="left:815.9px;top:687.9px;width:6.2px;height:6.2px;border:1.3px solid #555;border-radius:50%;background:#fff"></div>
<span class="t" style="letter-spacing:-0.005px;left:815.2px;top:684.49px;font-size:13.5px;color:#4a4a4a;font-weight:500;transform:translateX(-100%);text-shadow:0 0 2px #fff,0 0 2px #fff,0 0 1px #fff;-webkit-text-stroke:0.45px #4a4a4a;">Varese</span>
<div class="abs" style="left:863.4px;top:691.4px;width:6.2px;height:6.2px;border:1.3px solid #555;border-radius:50%;background:#fff"></div>
<span class="t" style="letter-spacing:-0.027px;left:870.8px;top:687.99px;font-size:13.5px;color:#4a4a4a;font-weight:500;text-shadow:0 0 2px #fff,0 0 2px #fff,0 0 1px #fff;-webkit-text-stroke:0.45px #4a4a4a;">Como</span>
<div class="abs" style="left:885.9px;top:731.9px;width:6.2px;height:6.2px;border:1.3px solid #555;border-radius:50%;background:#fff"></div>
<span class="t" style="letter-spacing:-0.201px;left:893.3px;top:728.98px;font-size:12.5px;color:#555;text-shadow:0 0 2px #fff,0 0 2px #fff,0 0 1px #fff;">Seregno</span>
<div class="abs" style="left:675.9px;top:754.9px;width:6.2px;height:6.2px;border:1.3px solid #555;border-radius:50%;background:#fff"></div>
<span class="t" style="letter-spacing:-0.039px;left:683.3px;top:751.98px;font-size:12.5px;color:#555;text-shadow:0 0 2px #fff,0 0 2px #fff,0 0 1px #fff;">Biella</span>
<div class="abs" style="left:832.9px;top:746.4px;width:6.2px;height:6.2px;border:1.3px solid #555;border-radius:50%;background:#fff"></div>
<span class="t" style="letter-spacing:-0.078px;left:840.3px;top:743.48px;font-size:12.5px;color:#555;text-shadow:0 0 2px #fff,0 0 2px #fff,0 0 1px #fff;">Legnano</span>
<div class="abs" style="left:854.9px;top:762.4px;width:6.2px;height:6.2px;border:1.3px solid #555;border-radius:50%;background:#fff"></div>
<span class="t" style="letter-spacing:-0.406px;left:854.2px;top:759.48px;font-size:12.5px;color:#555;transform:translateX(-100%);text-shadow:0 0 2px #fff,0 0 2px #fff,0 0 1px #fff;">Rho</span>
<div class="abs" style="left:897.9px;top:749.4px;width:6.2px;height:6.2px;border:1.3px solid #555;border-radius:50%;background:#fff"></div>
<span class="t" style="letter-spacing:0.106px;left:905.3px;top:745.99px;font-size:13.5px;color:#4a4a4a;font-weight:500;text-shadow:0 0 2px #fff,0 0 2px #fff,0 0 1px #fff;-webkit-text-stroke:0.45px #4a4a4a;">Monza</span>
<div class="abs" style="left:777.9px;top:784.9px;width:6.2px;height:6.2px;border:1.3px solid #555;border-radius:50%;background:#fff"></div>
<span class="t" style="letter-spacing:-0.117px;left:785.3px;top:781.49px;font-size:13.5px;color:#4a4a4a;font-weight:500;text-shadow:0 0 2px #fff,0 0 2px #fff,0 0 1px #fff;-webkit-text-stroke:0.45px #4a4a4a;">Novara</span>
<div class="abs" style="left:880.7px;top:779.2px;width:7.6px;height:7.6px;border:1.3px solid #555;border-radius:50%;background:#fff"></div>
<span class="t" style="letter-spacing:0.305px;left:889.5px;top:774.32px;font-size:18px;color:#333;font-weight:500;text-shadow:0 0 2px #fff,0 0 2px #fff,0 0 1px #fff;-webkit-text-stroke:0.45px #333;">Milano</span>
<div class="abs" style="left:741.9px;top:817.4px;width:6.2px;height:6.2px;border:1.3px solid #555;border-radius:50%;background:#fff"></div>
<span class="t" style="letter-spacing:0.055px;left:749.3px;top:814.48px;font-size:12.5px;color:#555;text-shadow:0 0 2px #fff,0 0 2px #fff,0 0 1px #fff;">Vercelli</span>
<div class="abs" style="left:876.4px;top:851.4px;width:6.2px;height:6.2px;border:1.3px solid #555;border-radius:50%;background:#fff"></div>
<span class="t" style="letter-spacing:-0.128px;left:883.8px;top:847.99px;font-size:13.5px;color:#4a4a4a;font-weight:500;text-shadow:0 0 2px #fff,0 0 2px #fff,0 0 1px #fff;-webkit-text-stroke:0.45px #4a4a4a;">Pavia</span>
<div class="abs" style="left:1067.9px;top:760.9px;width:6.2px;height:6.2px;border:1.3px solid #555;border-radius:50%;background:#fff"></div>
<span class="t" style="letter-spacing:0.016px;left:1075.3px;top:757.49px;font-size:13.5px;color:#4a4a4a;font-weight:500;text-shadow:0 0 2px #fff,0 0 2px #fff,0 0 1px #fff;-webkit-text-stroke:0.45px #4a4a4a;">Brescia</span>
<div class="abs" style="left:939.4px;top:820.4px;width:6.2px;height:6.2px;border:1.3px solid #555;border-radius:50%;background:#fff"></div>
<span class="t" style="letter-spacing:0.078px;left:946.8px;top:817.48px;font-size:12.5px;color:#555;text-shadow:0 0 2px #fff,0 0 2px #fff,0 0 1px #fff;">Lodi</span>
<span class="t" style="letter-spacing:-0.234px;left:668px;top:777.48px;font-size:12.5px;color:#555;text-shadow:0 0 2px #fff,0 0 2px #fff,0 0 1px #fff;">ea</span>
<span class="t" style="letter-spacing:-0.002px;left:976px;top:718.23px;font-size:13.5px;color:#4a4a4a;font-weight:500;text-shadow:0 0 2px #fff,0 0 2px #fff,0 0 1px #fff;-webkit-text-stroke:0.45px #4a4a4a;">Bergamo</span>
<span class="t" style="letter-spacing:-0.053px;left:997.5px;top:628.85px;font-size:13.6px;color:#3f9079;transform:translateX(-50%);text-shadow:0 0 2px #fff,0 0 2px #fff,0 0 1px #fff;">Parco</span>
<span class="t" style="letter-spacing:-0.016px;left:997.5px;top:642.85px;font-size:13.6px;color:#3f9079;transform:translateX(-50%);text-shadow:0 0 2px #fff,0 0 2px #fff,0 0 1px #fff;">regionale</span>
<span class="t" style="letter-spacing:-0.126px;left:997.5px;top:656.85px;font-size:13.6px;color:#3f9079;transform:translateX(-50%);text-shadow:0 0 2px #fff,0 0 2px #fff,0 0 1px #fff;">delle Orobie</span>
<span class="t" style="letter-spacing:-0.050px;left:997.5px;top:670.85px;font-size:13.6px;color:#3f9079;transform:translateX(-50%);text-shadow:0 0 2px #fff,0 0 2px #fff,0 0 1px #fff;">Bergamasche</span>
<div class="abs" style="left:1100px;top:660px;width:77px;height:26px;overflow:hidden">
<span class="t" style="letter-spacing:-0.258px;left:7px;top:6.64px;font-size:12.3px;color:#555;text-shadow:0 0 2px #fff,0 0 2px #fff,0 0 1px #fff;">Riva del Garda</span>
</div>
<div class="abs" style="left:1126px;top:766px;width:51px;height:32px;overflow:hidden">
<span class="t" style="letter-spacing:-0.153px;left:8px;top:5.14px;font-size:12.3px;color:#666;text-shadow:0 0 2px #fff,0 0 2px #fff,0 0 1px #fff;">Desenzano</span>
<span class="t" style="letter-spacing:-0.196px;left:8px;top:16.64px;font-size:12.3px;color:#666;text-shadow:0 0 2px #fff,0 0 2px #fff,0 0 1px #fff;">del Garda</span>
<div class="abs" style="left:1.5px;top:14px;width:4px;height:4px;border:1px solid #666;border-radius:50%;background:#fff"></div>
</div>
<svg style="left:0;top:0" width="1536" height="864"><circle cx="948.3" cy="708.6" r="3.6" fill="rgba(176,160,205,.62)" stroke="#7b1fa2" stroke-width="1.8"/><circle cx="981.5" cy="754.8" r="5.0" fill="rgba(176,160,205,.62)" stroke="#7b1fa2" stroke-width="1.8"/><circle cx="990.0" cy="750.0" r="4.3" fill="rgba(176,160,205,.62)" stroke="#7b1fa2" stroke-width="1.8"/><circle cx="991.0" cy="759.5" r="4.6" fill="rgba(176,160,205,.62)" stroke="#7b1fa2" stroke-width="1.8"/><circle cx="968.5" cy="763.0" r="5.6" fill="rgba(176,160,205,.62)" stroke="#7b1fa2" stroke-width="1.8"/><circle cx="979.5" cy="765.5" r="3.6" fill="rgba(176,160,205,.62)" stroke="#7b1fa2" stroke-width="1.8"/><circle cx="959.0" cy="769.0" r="3.6" fill="rgba(176,160,205,.62)" stroke="#7b1fa2" stroke-width="1.8"/><circle cx="941.5" cy="720.5" r="2.6" fill="rgba(176,160,205,.62)" stroke="#7b1fa2" stroke-width="1.8"/><circle cx="1004.0" cy="734.5" r="5.6" fill="rgba(176,160,205,.62)" stroke="#7b1fa2" stroke-width="1.8"/><circle cx="1041.5" cy="720.0" r="6.0" fill="rgba(176,160,205,.62)" stroke="#7b1fa2" stroke-width="1.8"/><path d="M951 713 Q957 706 966 709 Q974 711 979 714 Q986 718 983 728 Q986 738 982 746 Q984 754 976 757 Q968 759 963 752 Q955 748 954 738 Q948 728 951 713Z" fill="#7b1fa2"/><circle cx="960.2" cy="714.1" r="4.5" fill="rgba(123,31,162,.55)" stroke="#7b1fa2" stroke-width="1.6"/><circle cx="962.1" cy="709.1" r="4.0" fill="rgba(123,31,162,.55)" stroke="#7b1fa2" stroke-width="1.6"/><circle cx="964.7" cy="750.7" r="2.9" fill="rgba(123,31,162,.55)" stroke="#7b1fa2" stroke-width="1.6"/><circle cx="958.7" cy="713.8" r="2.9" fill="rgba(123,31,162,.55)" stroke="#7b1fa2" stroke-width="1.6"/><circle cx="959.6" cy="750.1" r="3.0" fill="rgba(123,31,162,.55)" stroke="#7b1fa2" stroke-width="1.6"/><circle cx="971.6" cy="740.5" r="3.6" fill="rgba(123,31,162,.55)" stroke="#7b1fa2" stroke-width="1.6"/><circle cx="970.1" cy="709.4" r="2.7" fill="rgba(123,31,162,.55)" stroke="#7b1fa2" stroke-width="1.6"/><circle cx="964.8" cy="723.0" r="4.3" fill="rgba(123,31,162,.55)" stroke="#7b1fa2" stroke-width="1.6"/><circle cx="965.9" cy="722.2" r="4.9" fill="rgba(123,31,162,.55)" stroke="#7b1fa2" stroke-width="1.6"/><circle cx="976.8" cy="719.2" r="4.2" fill="rgba(123,31,162,.55)" stroke="#7b1fa2" stroke-width="1.6"/><circle cx="969.1" cy="753.3" r="4.7" fill="rgba(123,31,162,.55)" stroke="#7b1fa2" stroke-width="1.6"/><circle cx="979.3" cy="714.2" r="4.0" fill="rgba(123,31,162,.55)" stroke="#7b1fa2" stroke-width="1.6"/><circle cx="979.6" cy="736.9" r="5.1" fill="rgba(123,31,162,.55)" stroke="#7b1fa2" stroke-width="1.6"/><circle cx="959.8" cy="743.5" r="4.3" fill="rgba(123,31,162,.55)" stroke="#7b1fa2" stroke-width="1.6"/><circle cx="971.5" cy="730.6" r="5.0" fill="rgba(123,31,162,.55)" stroke="#7b1fa2" stroke-width="1.6"/><circle cx="975.2" cy="709.3" r="4.6" fill="rgba(123,31,162,.55)" stroke="#7b1fa2" stroke-width="1.6"/><circle cx="982.2" cy="721.4" r="3.7" fill="rgba(123,31,162,.55)" stroke="#7b1fa2" stroke-width="1.6"/><circle cx="966.3" cy="715.1" r="2.9" fill="rgba(123,31,162,.55)" stroke="#7b1fa2" stroke-width="1.6"/><circle cx="951.7" cy="719.4" r="3.7" fill="rgba(123,31,162,.55)" stroke="#7b1fa2" stroke-width="1.6"/><circle cx="965.8" cy="735.7" r="5.2" fill="rgba(123,31,162,.55)" stroke="#7b1fa2" stroke-width="1.6"/><circle cx="958.3" cy="728.4" r="3.6" fill="rgba(123,31,162,.55)" stroke="#7b1fa2" stroke-width="1.6"/><circle cx="952.6" cy="715.5" r="3.2" fill="rgba(123,31,162,.55)" stroke="#7b1fa2" stroke-width="1.6"/><circle cx="956.3" cy="732.2" r="4.3" fill="rgba(123,31,162,.55)" stroke="#7b1fa2" stroke-width="1.6"/><circle cx="964.4" cy="725.9" r="4.2" fill="rgba(123,31,162,.55)" stroke="#7b1fa2" stroke-width="1.6"/><circle cx="968.7" cy="739.4" r="4.5" fill="rgba(123,31,162,.55)" stroke="#7b1fa2" stroke-width="1.6"/><circle cx="981.1" cy="727.2" r="3.7" fill="rgba(123,31,162,.55)" stroke="#7b1fa2" stroke-width="1.6"/><circle cx="955.2" cy="714.8" r="3.5" fill="rgba(123,31,162,.55)" stroke="#7b1fa2" stroke-width="1.6"/><circle cx="952.5" cy="719.6" r="3.5" fill="rgba(123,31,162,.55)" stroke="#7b1fa2" stroke-width="1.6"/><circle cx="962.0" cy="712.6" r="5.0" fill="rgba(123,31,162,.55)" stroke="#7b1fa2" stroke-width="1.6"/><circle cx="967.3" cy="710.6" r="2.8" fill="rgba(123,31,162,.55)" stroke="#7b1fa2" stroke-width="1.6"/><circle cx="961.1" cy="720.3" r="5.0" fill="rgba(123,31,162,.55)" stroke="#7b1fa2" stroke-width="1.6"/><circle cx="976.6" cy="720.1" r="3.6" fill="rgba(123,31,162,.55)" stroke="#7b1fa2" stroke-width="1.6"/><circle cx="969.4" cy="748.1" r="3.5" fill="rgba(123,31,162,.55)" stroke="#7b1fa2" stroke-width="1.6"/><circle cx="981.5" cy="750.2" r="4.7" fill="rgba(123,31,162,.55)" stroke="#7b1fa2" stroke-width="1.6"/><circle cx="957.4" cy="743.4" r="5.4" fill="rgba(123,31,162,.55)" stroke="#7b1fa2" stroke-width="1.6"/><circle cx="962.0" cy="717.9" r="3.2" fill="rgba(123,31,162,.55)" stroke="#7b1fa2" stroke-width="1.6"/><circle cx="954.7" cy="717.0" r="4.4" fill="rgba(123,31,162,.55)" stroke="#7b1fa2" stroke-width="1.6"/><circle cx="967.1" cy="741.3" r="4.9" fill="rgba(123,31,162,.55)" stroke="#7b1fa2" stroke-width="1.6"/><circle cx="979.0" cy="731.8" r="3.0" fill="rgba(123,31,162,.55)" stroke="#7b1fa2" stroke-width="1.6"/><circle cx="980.7" cy="724.0" r="4.9" fill="rgba(123,31,162,.55)" stroke="#7b1fa2" stroke-width="1.6"/><circle cx="977.9" cy="715.2" r="2.9" fill="rgba(123,31,162,.55)" stroke="#7b1fa2" stroke-width="1.6"/><circle cx="974.9" cy="724.9" r="4.1" fill="rgba(123,31,162,.55)" stroke="#7b1fa2" stroke-width="1.6"/><circle cx="969.2" cy="756.4" r="3.8" fill="rgba(123,31,162,.55)" stroke="#7b1fa2" stroke-width="1.6"/><circle cx="955.3" cy="719.6" r="3.4" fill="rgba(123,31,162,.55)" stroke="#7b1fa2" stroke-width="1.6"/><circle cx="957.4" cy="728.6" r="2.9" fill="rgba(123,31,162,.55)" stroke="#7b1fa2" stroke-width="1.6"/><circle cx="966.2" cy="737.5" r="5.2" fill="rgba(123,31,162,.55)" stroke="#7b1fa2" stroke-width="1.6"/><circle cx="964.5" cy="755.6" r="4.0" fill="rgba(123,31,162,.55)" stroke="#7b1fa2" stroke-width="1.6"/><circle cx="969.4" cy="734.3" r="2.6" fill="rgba(123,31,162,.55)" stroke="#7b1fa2" stroke-width="1.6"/><circle cx="965.4" cy="715.9" r="2.5" fill="rgba(123,31,162,.55)" stroke="#7b1fa2" stroke-width="1.6"/><circle cx="981.2" cy="715.3" r="3.9" fill="rgba(123,31,162,.55)" stroke="#7b1fa2" stroke-width="1.6"/><circle cx="977.9" cy="736.0" r="3.5" fill="rgba(123,31,162,.55)" stroke="#7b1fa2" stroke-width="1.6"/><circle cx="968.8" cy="736.0" r="4.9" fill="rgba(123,31,162,.55)" stroke="#7b1fa2" stroke-width="1.6"/><circle cx="956.9" cy="721.0" r="4.8" fill="rgba(123,31,162,.55)" stroke="#7b1fa2" stroke-width="1.6"/><circle cx="968.3" cy="736.3" r="4.8" fill="rgba(123,31,162,.55)" stroke="#7b1fa2" stroke-width="1.6"/><circle cx="973.0" cy="733.3" r="4.0" fill="rgba(123,31,162,.55)" stroke="#7b1fa2" stroke-width="1.6"/><circle cx="976.5" cy="730.4" r="4.1" fill="rgba(123,31,162,.55)" stroke="#7b1fa2" stroke-width="1.6"/><circle cx="976.8" cy="753.3" r="5.3" fill="rgba(123,31,162,.55)" stroke="#7b1fa2" stroke-width="1.6"/><circle cx="965.5" cy="709.9" r="3.2" fill="rgba(123,31,162,.55)" stroke="#7b1fa2" stroke-width="1.6"/><circle cx="975.1" cy="713.7" r="5.1" fill="rgba(123,31,162,.55)" stroke="#7b1fa2" stroke-width="1.6"/><circle cx="965.0" cy="733.8" r="3.5" fill="rgba(123,31,162,.55)" stroke="#7b1fa2" stroke-width="1.6"/><circle cx="954.6" cy="723.2" r="4.7" fill="rgba(123,31,162,.55)" stroke="#7b1fa2" stroke-width="1.6"/><circle cx="960.6" cy="739.7" r="4.0" fill="rgba(123,31,162,.55)" stroke="#7b1fa2" stroke-width="1.6"/><circle cx="950.6" cy="720.3" r="2.6" fill="rgba(123,31,162,.55)" stroke="#7b1fa2" stroke-width="1.6"/><circle cx="980.3" cy="720.6" r="2.9" fill="rgba(123,31,162,.55)" stroke="#7b1fa2" stroke-width="1.6"/><circle cx="964.6" cy="755.2" r="5.0" fill="rgba(123,31,162,.55)" stroke="#7b1fa2" stroke-width="1.6"/><circle cx="957.4" cy="714.1" r="5.3" fill="rgba(123,31,162,.55)" stroke="#7b1fa2" stroke-width="1.6"/><circle cx="971.1" cy="743.8" r="2.8" fill="rgba(123,31,162,.55)" stroke="#7b1fa2" stroke-width="1.6"/><circle cx="964.7" cy="709.9" r="5.3" fill="rgba(123,31,162,.55)" stroke="#7b1fa2" stroke-width="1.6"/><circle cx="973.9" cy="749.3" r="2.8" fill="rgba(123,31,162,.55)" stroke="#7b1fa2" stroke-width="1.6"/><circle cx="960.9" cy="735.9" r="5.3" fill="rgba(123,31,162,.55)" stroke="#7b1fa2" stroke-width="1.6"/><circle cx="941.0" cy="730.0" r="1.8" fill="#7b1fa2" stroke="#7b1fa2" stroke-width="1.2"/><circle cx="944.0" cy="736.0" r="2.0" fill="#7b1fa2" stroke="#7b1fa2" stroke-width="1.2"/><circle cx="946.0" cy="742.0" r="2.2" fill="#7b1fa2" stroke="#7b1fa2" stroke-width="1.2"/><circle cx="942.0" cy="745.0" r="1.6" fill="#7b1fa2" stroke="#7b1fa2" stroke-width="1.2"/><circle cx="947.0" cy="757.0" r="1.6" fill="#7b1fa2" stroke="#7b1fa2" stroke-width="1.2"/><circle cx="953.0" cy="747.0" r="2.0" fill="#7b1fa2" stroke="#7b1fa2" stroke-width="1.2"/><circle cx="947.0" cy="724.0" r="2.0" fill="#7b1fa2" stroke="#7b1fa2" stroke-width="1.2"/><circle cx="950.0" cy="734.0" r="2.2" fill="#7b1fa2" stroke="#7b1fa2" stroke-width="1.2"/><circle cx="944.0" cy="729.0" r="1.5" fill="#7b1fa2" stroke="#7b1fa2" stroke-width="1.2"/><path d="M1004 738 L1010 733 L1018 731 L1024 727 L1029 729 L1026 736 L1019 742 L1017 750 L1011 753 L1006 747Z" fill="#7b1fa2"/><circle cx="1007.0" cy="739.0" r="4.0" fill="rgba(123,31,162,.6)" stroke="#7b1fa2" stroke-width="1.6"/><circle cx="1011.0" cy="744.0" r="4.5" fill="rgba(123,31,162,.6)" stroke="#7b1fa2" stroke-width="1.6"/><circle cx="1013.0" cy="750.0" r="3.5" fill="rgba(123,31,162,.6)" stroke="#7b1fa2" stroke-width="1.6"/><circle cx="1015.0" cy="737.0" r="4.0" fill="rgba(123,31,162,.6)" stroke="#7b1fa2" stroke-width="1.6"/><circle cx="1020.0" cy="733.0" r="4.0" fill="rgba(123,31,162,.6)" stroke="#7b1fa2" stroke-width="1.6"/><circle cx="1025.0" cy="730.0" r="3.5" fill="rgba(123,31,162,.6)" stroke="#7b1fa2" stroke-width="1.6"/><circle cx="1009.0" cy="735.0" r="3.0" fill="rgba(123,31,162,.6)" stroke="#7b1fa2" stroke-width="1.6"/><circle cx="1018.0" cy="741.0" r="3.0" fill="rgba(123,31,162,.6)" stroke="#7b1fa2" stroke-width="1.6"/><circle cx="1022.0" cy="737.0" r="3.0" fill="rgba(123,31,162,.6)" stroke="#7b1fa2" stroke-width="1.6"/><circle cx="1027.0" cy="728.0" r="2.5" fill="rgba(123,31,162,.6)" stroke="#7b1fa2" stroke-width="1.6"/><circle cx="1016.0" cy="746.0" r="3.0" fill="rgba(123,31,162,.6)" stroke="#7b1fa2" stroke-width="1.6"/><circle cx="806.0" cy="721.0" r="4.5" fill="rgba(176,160,205,.62)" stroke="#7b1fa2" stroke-width="1.8"/><circle cx="811.0" cy="727.0" r="3.5" fill="#7b1fa2" stroke="#7b1fa2" stroke-width="1.8"/><circle cx="815.0" cy="721.0" r="3.0" fill="#7b1fa2" stroke="#7b1fa2" stroke-width="1.8"/><circle cx="818.0" cy="728.0" r="3.0" fill="#7b1fa2" stroke="#7b1fa2" stroke-width="1.8"/><circle cx="812.0" cy="733.0" r="3.0" fill="#7b1fa2" stroke="#7b1fa2" stroke-width="1.8"/><circle cx="817.0" cy="735.0" r="2.5" fill="#7b1fa2" stroke="#7b1fa2" stroke-width="1.8"/><circle cx="803.0" cy="727.0" r="3.0" fill="#7b1fa2" stroke="#7b1fa2" stroke-width="1.8"/><circle cx="808.0" cy="731.0" r="2.5" fill="#7b1fa2" stroke="#7b1fa2" stroke-width="1.8"/><circle cx="812.0" cy="741.0" r="4.0" fill="rgba(176,160,205,.62)" stroke="#7b1fa2" stroke-width="1.8"/><circle cx="824.0" cy="745.5" r="3.0" fill="#7b1fa2" stroke="#7b1fa2" stroke-width="1.8"/><circle cx="800.0" cy="722.0" r="2.5" fill="#7b1fa2" stroke="#7b1fa2" stroke-width="1.8"/><circle cx="906.0" cy="790.0" r="3.6" fill="rgba(176,160,205,.62)" stroke="#7b1fa2" stroke-width="1.8"/><circle cx="904.0" cy="802.0" r="4.2" fill="rgba(176,160,205,.62)" stroke="#7b1fa2" stroke-width="1.8"/><circle cx="925.0" cy="807.5" r="6.2" fill="rgba(176,160,205,.62)" stroke="#7b1fa2" stroke-width="1.8"/><circle cx="908.0" cy="812.0" r="5.6" fill="rgba(176,160,205,.62)" stroke="#7b1fa2" stroke-width="1.8"/><circle cx="913.0" cy="820.0" r="3.6" fill="rgba(176,160,205,.62)" stroke="#7b1fa2" stroke-width="1.8"/><circle cx="913.0" cy="811.0" r="4.5" fill="rgba(123,31,162,.45)" stroke="#7b1fa2" stroke-width="1.6"/><circle cx="917.0" cy="813.0" r="4.5" fill="rgba(123,31,162,.45)" stroke="#7b1fa2" stroke-width="1.6"/><circle cx="915.0" cy="808.0" r="3.5" fill="rgba(123,31,162,.45)" stroke="#7b1fa2" stroke-width="1.6"/><circle cx="920.0" cy="810.0" r="4.0" fill="rgba(123,31,162,.45)" stroke="#7b1fa2" stroke-width="1.6"/><circle cx="911.0" cy="815.0" r="3.5" fill="rgba(123,31,162,.45)" stroke="#7b1fa2" stroke-width="1.6"/><circle cx="918.0" cy="816.0" r="3.0" fill="rgba(123,31,162,.45)" stroke="#7b1fa2" stroke-width="1.6"/><circle cx="1034.5" cy="858.0" r="6.0" fill="rgba(176,160,205,.62)" stroke="#7b1fa2" stroke-width="1.8"/><circle cx="889.0" cy="743.5" r="1.8" fill="rgba(176,160,205,.62)" stroke="#7b1fa2" stroke-width="1.6"/><circle cx="892.0" cy="751.0" r="2.2" fill="rgba(176,160,205,.62)" stroke="#7b1fa2" stroke-width="1.6"/><circle cx="890.0" cy="760.0" r="2.6" fill="rgba(176,160,205,.62)" stroke="#7b1fa2" stroke-width="1.6"/><circle cx="893.0" cy="766.0" r="4.2" fill="rgba(176,160,205,.62)" stroke="#7b1fa2" stroke-width="1.6"/><circle cx="942.0" cy="745.5" r="2.2" fill="rgba(176,160,205,.62)" stroke="#7b1fa2" stroke-width="1.6"/><circle cx="887.0" cy="775.0" r="2.0" fill="#7b1fa2" stroke="#7b1fa2" stroke-width="0.5"/><circle cx="947.0" cy="754.5" r="1.8" fill="#7b1fa2" stroke="#7b1fa2" stroke-width="0.5"/><circle cx="905.0" cy="762.0" r="1.0" fill="#7b1fa2" stroke="#7b1fa2" stroke-width="0.5"/><circle cx="911.0" cy="766.5" r="1.6" fill="#7b1fa2" stroke="#7b1fa2" stroke-width="0.5"/><circle cx="910.0" cy="741.0" r="0.8" fill="#7b1fa2" stroke="#7b1fa2" stroke-width="0.5"/><circle cx="917.0" cy="744.0" r="0.8" fill="#7b1fa2" stroke="#7b1fa2" stroke-width="0.5"/><circle cx="934.0" cy="747.0" r="1.2" fill="#7b1fa2" stroke="#7b1fa2" stroke-width="0.5"/><circle cx="935.0" cy="743.0" r="1.0" fill="#7b1fa2" stroke="#7b1fa2" stroke-width="0.5"/><circle cx="900.0" cy="766.0" r="0.8" fill="#7b1fa2" stroke="#7b1fa2" stroke-width="0.5"/><circle cx="912.0" cy="761.0" r="0.7" fill="#7b1fa2" stroke="#7b1fa2" stroke-width="0.5"/><circle cx="884.0" cy="774.0" r="1.2" fill="#7b1fa2" stroke="#7b1fa2" stroke-width="0.5"/></svg>
<div class="abs" style="left:678px;top:635px;width:40px;height:80px;background:#fff;box-shadow:0 1px 3px rgba(0,0,0,.3)"></div>
<div class="abs" style="left:681.5px;top:674.5px;width:33px;height:1px;background:#e3e3e3;"></div>
<svg style="left:678px;top:635px" width="40" height="80"><path d="M12 20.500 H29 M20.500 12 V29" stroke="#555" stroke-width="2" fill="none"/><path d="M12 60.500 H29" stroke="#555" stroke-width="2"/></svg>
<div class="abs" style="left:1208px;top:97px;width:1px;height:767px;background:#d3dae6;"></div>
<span class="t" style="letter-spacing:0.221px;left:1228.5px;top:120.48px;font-size:22px;color:#336699;">Filtri</span>
<svg style="left:1497px;top:121px" width="16" height="16" viewBox="0 0 16 16"><path d="M3.3 3.3 L12.7 12.7 M12.7 3.3 L3.3 12.7" stroke="#5f6368" stroke-width="1.3" fill="none"/></svg>
<div class="abs" style="left:1224px;top:164.5px;width:297px;height:1px;background:#d9dee8;"></div>
<span class="t" style="letter-spacing:0.021px;left:1224px;top:174.10px;font-size:12px;color:#444;">Data invio comunicazione</span>
<div class="abs" style="left:1224.5px;top:193.7px;width:139.5px;height:35.6px;background:#cddbee;border:1px solid #b8c6db;border-radius:4px"></div>
<span class="t" style="letter-spacing:-0.058px;left:1294.25px;top:205.01px;font-size:14px;color:#3a3d42;transform:translateX(-50%);">Anno precedente</span>
<span class="t" style="letter-spacing:0.092px;left:1224px;top:250.10px;font-size:12px;color:#444;">Confronto</span>
<div class="abs" style="left:1224.5px;top:269.7px;width:192.5px;height:35.6px;background:#cddbee;border:1px solid #b8c6db;border-radius:4px"></div>
<span class="t" style="letter-spacing:-0.058px;left:1236.5px;top:281.01px;font-size:14px;color:#3a3d42;">Anno precedente</span>
<svg style="left:1385.5px;top:284.7px" width="12" height="6"><path d="M1 0.5 L11 0.5 L6 5.5Z" fill="#5f6368"/></svg>
<span class="t" style="letter-spacing:0.049px;left:1224px;top:326.10px;font-size:12px;color:#444;">Contesto</span>
<div class="abs" style="left:1224.5px;top:345.7px;width:141px;height:35.6px;background:transparent;border:1px solid #c6ccd7;border-radius:4px"></div>
<span class="t" style="letter-spacing:-0.028px;left:1295px;top:357.01px;font-size:14px;color:#3a3d42;transform:translateX(-50%);">è qualsiasi valore</span>
<span class="t" style="letter-spacing:0.025px;left:1224px;top:402.10px;font-size:12px;color:#444;">Mese scadenza richiamo</span>
<div class="abs" style="left:1224.5px;top:421.7px;width:141px;height:35.6px;background:transparent;border:1px solid #c6ccd7;border-radius:4px"></div>
<span class="t" style="letter-spacing:-0.028px;left:1295px;top:433.01px;font-size:14px;color:#3a3d42;transform:translateX(-50%);">è qualsiasi valore</span>
<span class="t" style="letter-spacing:0.031px;left:1224px;top:478.10px;font-size:12px;color:#444;">Mezzo</span>
<div class="abs" style="left:1224.5px;top:497.7px;width:141px;height:35.6px;background:transparent;border:1px solid #c6ccd7;border-radius:4px"></div>
<span class="t" style="letter-spacing:-0.028px;left:1295px;top:509.01px;font-size:14px;color:#3a3d42;transform:translateX(-50%);">è qualsiasi valore</span>
<span class="t" style="letter-spacing:0.062px;left:1224px;top:554.10px;font-size:12px;color:#444;">Committente o Privato</span>
<div class="abs" style="left:1224.5px;top:573.7px;width:192.5px;height:35.6px;background:transparent;border:1px solid #c6ccd7;border-radius:4px"></div>
<span class="t" style="letter-spacing:0.017px;left:1236.5px;top:585.01px;font-size:14px;color:#3a3d42;">qualsiasi valore</span>
<svg style="left:1385.5px;top:588.7px" width="12" height="6"><path d="M1 0.5 L11 0.5 L6 5.5Z" fill="#5f6368"/></svg>
<span class="t" style="letter-spacing:0.086px;left:1224px;top:630.10px;font-size:12px;color:#444;">Denominazione committente</span>
<div class="abs" style="left:1224.5px;top:649.7px;width:141px;height:35.6px;background:transparent;border:1px solid #c6ccd7;border-radius:4px"></div>
<span class="t" style="letter-spacing:-0.028px;left:1295px;top:661.01px;font-size:14px;color:#3a3d42;transform:translateX(-50%);">è qualsiasi valore</span>
<span class="t" style="letter-spacing:-0.027px;left:1224px;top:706.10px;font-size:12px;color:#444;">Granularità geografica</span>
<div class="abs" style="left:1224.5px;top:725.7px;width:192.5px;height:35.6px;background:#cddbee;border:1px solid #b8c6db;border-radius:4px"></div>
<span class="t" style="letter-spacing:-0.112px;left:1236.5px;top:737.01px;font-size:14px;color:#3a3d42;">Comune</span>
<svg style="left:1385.5px;top:740.7px" width="12" height="6"><path d="M1 0.5 L11 0.5 L6 5.5Z" fill="#5f6368"/></svg>
<span class="t" style="letter-spacing:0.079px;left:1224px;top:782.10px;font-size:12px;color:#444;">Tipo veicolo</span>
<div class="abs" style="left:1224.5px;top:801.7px;width:141px;height:35.6px;background:transparent;border:1px solid #c6ccd7;border-radius:4px"></div>
<span class="t" style="letter-spacing:-0.028px;left:1295px;top:813.01px;font-size:14px;color:#3a3d42;transform:translateX(-50%);">è qualsiasi valore</span>
<svg style="left:1285px;top:323.5px" width="16" height="16" viewBox="0 0 24 24"><path d="M17 7h-4v2h4c1.65 0 3 1.35 3 3s-1.35 3-3 3h-4v2h4c2.76 0 5-2.24 5-5s-2.240-5-5-5zm-6 8H7c-1.65 0-3-1.35-3-3s1.350-3 3-3h4V7H7c-2.760 0-5 2.240-5 5s2.240 5 5 5h4v-2zm-3-4h8v2H8z" fill="#5f6368"/></svg>
<svg style="left:1370px;top:399.5px" width="16" height="16" viewBox="0 0 24 24"><path d="M17 7h-4v2h4c1.65 0 3 1.35 3 3s-1.35 3-3 3h-4v2h4c2.76 0 5-2.24 5-5s-2.240-5-5-5zm-6 8H7c-1.65 0-3-1.35-3-3s1.350-3 3-3h4V7H7c-2.760 0-5 2.240-5 5s2.240 5 5 5h4v-2zm-3-4h8v2H8z" fill="#5f6368"/></svg>
<div class="abs" style="left:1224px;top:831.5px;width:297px;height:33px;background:#eaf1fb;"></div>
<div class="abs" style="left:1224px;top:832px;width:283px;height:15.5px;background:#f4f6fa;"></div>
<div class="abs" style="left:1243px;top:835.5px;width:232px;height:8.5px;background:#8c8c8c;border-radius:4.5px"></div>
<svg style="left:1224px;top:831.700px" width="283" height="16"><path d="M12 3.5 L12 12.5 L5 8Z" fill="#7d7d7d"/><path d="M271 3.5 L271 12.5 L278 8Z" fill="#7d7d7d"/></svg>
<div class="abs" style="left:1224px;top:847px;width:297px;height:1px;background:#e1e5ec;"></div>
<div class="abs" style="left:1507px;top:166px;width:14px;height:665px;background:#eef2fa;"></div>
<div class="abs" style="left:1510px;top:183px;width:8.5px;height:432px;background:#8c8c8c;border-radius:4.5px"></div>
<svg style="left:1507px;top:161.800px" width="14" height="670"><path d="M2.5 15.5 L7 8.5 L11.500 15.5Z" fill="#7d7d7d"/><path d="M2.5 658.500 L7 665.500 L11.500 658.500Z" fill="#7d7d7d"/></svg>
<div class="abs" style="left:1253px;top:78.5px;width:190px;height:32px;background:#fff;border-radius:17px;box-shadow:0 1px 3px rgba(30,60,110,.45);overflow:hidden"></div>
<div class="abs" style="left:1253px;top:78.5px;width:100.5px;height:32px;background:#336699;border-radius:17px 0 0 17px"></div>
<span class="t" style="letter-spacing:0.017px;left:1266.5px;top:87.95px;font-size:13px;color:#fff;text-shadow:0 0 0.5px #fff;">Aggiornato al:</span>
<span class="t" style="letter-spacing:0.414px;left:1360px;top:87.87px;font-size:13.1px;color:#3b6ea3;">06/07/2025</span>
<div class="abs" style="left:1458px;top:78.5px;width:65px;height:32px;background:#ddebfb;border-radius:17px;box-shadow:0 1px 3px rgba(30,60,110,.45)"></div>
<div class="abs" style="left:918.3px;top:26.3px;width:40px;height:39px;background:#6798dc;border-radius:50%"></div>
<div class="abs" style="left:929.9px;top:36px;width:18px;height:18px;background:#fff;border-radius:50%"></div>
<span class="t" style="letter-spacing:0.000px;left:938.6px;top:36.14px;font-size:18px;color:#336699;font-weight:700;transform:translateX(-50%);font-style:italic;font-family:'Liberation Serif',serif;">i</span>
<div class="abs" style="left:1331px;top:29.8px;width:27px;height:27.5px;background:#fff;border-radius:50%"></div>
<svg style="left:1335.5px;top:34px;" width="19" height="19" viewBox="0 0 24 24"><path d="M12 22c1.100 0 2-.9 2-2h-4c0 1.100.9 2 2 2zm6-6v-5c0-3.070-1.640-5.640-4.500-6.320V4c0-.83-.67-1.500-1.500-1.500s-1.500.67-1.500 1.500v.68C7.630 5.360 6 7.920 6 11v5l-2 2v1h16v-1l-2-2z" fill="#336699"/><path d="M4.200 10.500c.1-2.600 1.300-4.700 3.100-6.100 M19.800 10.500c-.1-2.600-1.300-4.700-3.100-6.100" stroke="#336699" stroke-width="1.600" fill="none"/></svg>
<svg style="left:1393px;top:31.5px;" width="26" height="29" viewBox="0 0 26 29"><path d="M4.300 15 V11.500 a8.700 8.700 0 0 1 17.400 0 V15" stroke="#fff" stroke-width="2" fill="none"/><rect x="1.500" y="12.800" width="5.800" height="8.400" rx="2.600" fill="#fff"/><rect x="18.700" y="12.800" width="5.800" height="8.400" rx="2.600" fill="#fff"/><path d="M21.700 19.500 c0 3.600-3 5.200-7.500 5.200" stroke="#fff" stroke-width="1.700" fill="none"/><ellipse cx="13.200" cy="24.600" rx="3" ry="2" fill="#fff"/></svg>
<svg style="left:1446px;top:33px;" width="76" height="27" viewBox="0 0 76 27"><g fill="none" stroke-width="4.200" stroke-linejoin="bevel"><path d="M2.300 1.200 L15.500 9.300 L2.300 17.800" stroke="#fff"/><path d="M15 1.500 L1.500 9.300 L15 17.200" stroke="#12306e"/><path d="M15.500 9.300 L2.300 17.800" stroke="#fff"/></g><g font-family="Liberation Sans, sans-serif" font-weight="700" fill="#12306e" stroke="#12306e" stroke-width="0.500"><text x="18.300" y="18.600" font-size="25.800" textLength="19.300" lengthAdjust="spacingAndGlyphs">M</text><text x="37.500" y="18.600" font-size="25.800" textLength="19.300" lengthAdjust="spacingAndGlyphs">M</text><text x="57.200" y="18.600" font-size="25.800" textLength="16.600" lengthAdjust="spacingAndGlyphs">B</text><text x="18.800" y="25.500" font-size="5.600" textLength="54.500" lengthAdjust="spacing" stroke="none">SOFTWARE</text></g><path d="M39.400 0.200 L44.600 0.200 L47.200 9.500 L50 0.200 L55.200 0.200 L49.400 14.300 L45.300 14.300Z" fill="#fff"/></svg>
<svg style="left:1504px;top:2px;" width="26" height="26" viewBox="0 0 26 26"><g transform="translate(12.800 12.800) rotate(-41.700)" fill="#0a8a0a"><rect x="-7.200" y="-4.900" width="14.400" height="9.800" rx="2.500"/><rect x="-9.300" y="-3.700" width="18.600" height="7.400" rx="2.500"/><rect x="-11.200" y="-2.200" width="22.400" height="4.400" rx="2"/><rect x="-0.500" y="-5" width="1" height="10" fill="#cfe8cf"/></g></svg>
<svg style="left:1478px;top:82px;" width="25" height="24" viewBox="0 0 25 24"><g fill="none" stroke="#336699" stroke-width="3.400"><path d="M2.500 11 A10 9 0 0 1 19.500 5.500"/><path d="M22.500 13 A10 9 0 0 1 5.500 18.500"/></g><path d="M24.500 1.500 L24.500 10.300 L15.700 10.300Z" fill="#336699"/><path d="M0.500 22.500 L0.500 13.700 L9.300 13.700Z" fill="#336699"/></svg>
<span class="t" style="letter-spacing:0.092px;left:1027px;top:125.10px;font-size:12px;color:#5a5e63;">40 m fa</span>
<svg style="left:1080px;top:121px;" width="19.5" height="19.5" viewBox="0 0 24 24"><path d="M17.650 6.350C16.200 4.900 14.210 4 12 4c-4.420 0-7.990 3.580-7.990 8s3.570 8 7.990 8c3.730 0 6.840-2.550 7.730-6h-2.080c-.82 2.330-3.040 4-5.650 4-3.310 0-6-2.690-6-6s2.690-6 6-6c1.660 0 3.140.69 4.220 1.780L13 11h7V4l-2.350 2.350z" fill="#6b6f75"/></svg>
<svg style="left:1125px;top:122px;" width="18" height="18" viewBox="0 0 24 24"><path d="M10 18h4v-2h-4v2zM3 6v2h18V6H3zm3 7h12v-2H6v2z" fill="#5f6368"/></svg>
<svg style="left:1165px;top:122px;" width="18" height="18" viewBox="0 0 24 24"><path d="M12 8c1.100 0 2-.9 2-2s-.9-2-2-2-2 .9-2 2 .9 2 2 2zm0 2c-1.100 0-2 .9-2 2s.9 2 2 2 2-.9 2-2-.9-2-2-2zm0 6c-1.100 0-2 .9-2 2s.9 2 2 2 2-.9 2-2-.9-2-2-2z" fill="#5f6368"/></svg>
<svg style="left:96px;top:117px;" width="24.6" height="24.6" viewBox="0 0 24.600 24.600"><circle cx="12.300" cy="12.300" r="10.900" stroke="#0a8a0a" stroke-width="2.200" fill="none"/><path d="M6.700 12.800 L10.600 16.600 L18 8.600" stroke="#0a8a0a" stroke-width="2.200" fill="none"/></svg>
<div class="abs" style="left:93.5px;top:149px;width:26.5px;height:68.5px;background:#b3e1d9;border:1px solid #3a9078;border-radius:6px"></div>
<span class="t" style="letter-spacing:-0.547px;left:106.700px;top:183.200px;font-size:13px;font-weight:700;color:#1f6d58;transform:translate(-50%,-50%) rotate(90deg)">BI BASIC</span>
<span class="t" style="letter-spacing:0.176px;left:106.500px;top:260.500px;font-size:25.500px;color:#336699;transform:translate(-50%,-50%) rotate(90deg)">Analisi</span>
<span class="t" style="letter-spacing:0.891px;left:46.5px;top:141.06px;font-size:51px;color:#fff;font-weight:700;transform:translateX(-50%);">€</span>
<svg style="left:27.5px;top:220px;" width="38" height="38" viewBox="0 0 38 38"><rect width="38" height="38" rx="2.500" fill="#fff"/><g stroke="#66a7ea" stroke-width="1.700" fill="none" stroke-linejoin="miter"><path d="M13 7 L19.500 19.300 L6.500 19.300Z"/><path d="M27 7 L33.500 19.300 L20.500 19.300Z"/><path d="M20 20.500 L26.500 32.500 L13.500 32.500Z"/></g></svg>
<svg style="left:28px;top:293px;" width="38" height="37" viewBox="0 0 38 37"><g stroke="#fff" fill="none" stroke-linecap="round"><path d="M4 33 L15.500 21.500" stroke-width="6.200"/><path d="M15 22 L28 9" stroke-width="2.200"/><path d="M28 9 L34 3" stroke-width="5.200"/><path d="M9 9 L30 29" stroke-width="5.600" stroke-linecap="butt"/></g><circle cx="8" cy="7.500" r="6.800" fill="#fff"/><circle cx="30.500" cy="29.500" r="6.800" fill="#fff"/><path d="M8 7.500 L10.500 -2" stroke="#66a7ea" stroke-width="4.600"/><path d="M30.500 29.500 L40 32" stroke="#66a7ea" stroke-width="4.600"/></svg>
<svg style="left:27px;top:366px;" width="38" height="38" viewBox="0 0 38 38"><circle cx="19" cy="19" r="19" fill="#fff"/><circle cx="19" cy="19" r="11.300" fill="#fff" stroke="#66a7ea" stroke-width="1.300"/><g stroke="#66a7ea" stroke-width="1.100"><path d="M19.00 16.80 L17.20 7.64"/><path d="M19.00 16.80 L20.80 7.64"/><path d="M21.09 18.32 L29.25 13.78"/><path d="M21.09 18.32 L30.36 17.20"/><path d="M20.29 20.78 L27.13 27.13"/><path d="M20.29 20.78 L24.22 29.25"/><path d="M17.71 20.78 L13.78 29.25"/><path d="M17.71 20.78 L10.87 27.13"/><path d="M16.91 18.32 L7.64 17.20"/><path d="M16.91 18.32 L8.75 13.78"/></g></svg>
<svg style="left:27px;top:439px;" width="40" height="40" viewBox="0 0 40 40"><path d="M4.300 31.300 L24 11.500" stroke="#fff" stroke-width="6" stroke-linecap="round" fill="none"/><circle cx="28.700" cy="8" r="7.500" fill="#fff"/><path d="M28.700 8 L38 0" stroke="#66a7ea" stroke-width="5"/><circle cx="4.600" cy="31.200" r="1.200" fill="#66a7ea"/><circle cx="28.700" cy="28" r="9.300" fill="#66a7ea"/><circle cx="28.700" cy="28" r="7.800" fill="#66a7ea" stroke="#fff" stroke-width="2"/><path d="M28.700 28 L28.700 22.500 A5.500 5.500 0 0 1 34.200 28Z" fill="#fff"/><rect x="26.400" y="16" width="4.600" height="2.200" rx="0.600" fill="#fff"/><path d="M35 19.500 L36.500 21" stroke="#fff" stroke-width="1.600"/></svg>
<svg style="left:28.5px;top:510px;" width="37" height="40" viewBox="0 0 37 40"><path d="M18.300 0.500 L36 8.800 L18.300 17.600 L0.600 8.800Z" fill="#fff"/><path d="M0.500 11.800 L17 20 L17 39.500 L0.500 31.300Z" fill="#fff"/><path d="M36.100 11.800 L19.600 20 L19.600 39.500 L36.100 31.300Z" fill="#fff"/><path d="M8.800 5 L26.500 13.600 M13.800 2.600 L31.500 11.200" stroke="#66a7ea" stroke-width="1.500"/></svg>
<svg style="left:27.5px;top:584.5px;" width="38.5" height="37.5" viewBox="0 0 38.500 37.500"><rect x="0.300" y="3" width="38" height="34.200" rx="3" fill="#fff"/><rect x="7.800" y="0" width="3.600" height="8.500" rx="1.800" fill="#fff" stroke="#66a7ea" stroke-width="1"/><rect x="26.800" y="0" width="3.600" height="8.500" rx="1.800" fill="#fff" stroke="#66a7ea" stroke-width="1"/><rect x="3.600" y="12.500" width="31.300" height="21.600" fill="#66a7ea"/><g fill="#fff"><rect x="20.0" y="15.0" width="4.800" height="4.500"/><rect x="26.9" y="15.0" width="4.800" height="4.500"/><rect x="6.2" y="21.3" width="4.800" height="4.500"/><rect x="13.1" y="21.3" width="4.800" height="4.500"/><rect x="20.0" y="21.3" width="4.800" height="4.500"/><rect x="26.9" y="21.3" width="4.800" height="4.500"/><rect x="6.2" y="27.6" width="4.800" height="4.500"/><rect x="13.1" y="27.6" width="4.800" height="4.500"/><rect x="20.0" y="27.6" width="4.800" height="4.500"/><rect x="26.9" y="27.6" width="4.800" height="4.500"/></g></svg>
<svg style="left:26px;top:658px;" width="42" height="36" viewBox="0 0 42 36"><path d="M2.500 11.500 h4.500 l13.500 -6.500 v24 l-13.500 -6.500 h-4.500 a1.800 1.800 0 0 1 -1.800 -1.800 v-7.400 a1.800 1.800 0 0 1 1.800 -1.800z" fill="#336699"/><path d="M6.500 22 h5.200 v8.500 a1 1 0 0 1 -1 1 h-3.200 a1 1 0 0 1 -1 -1z" fill="#336699"/><path d="M22.500 11.500 a5.500 5.500 0 0 1 0 11z" fill="#336699"/><g stroke="#336699" stroke-width="3"><path d="M29.500 8.800 L36.200 3.400"/><path d="M33 17.300 L40.500 17.300"/><path d="M29.500 25.800 L36.200 31.200"/></g></svg>
</body></html>
